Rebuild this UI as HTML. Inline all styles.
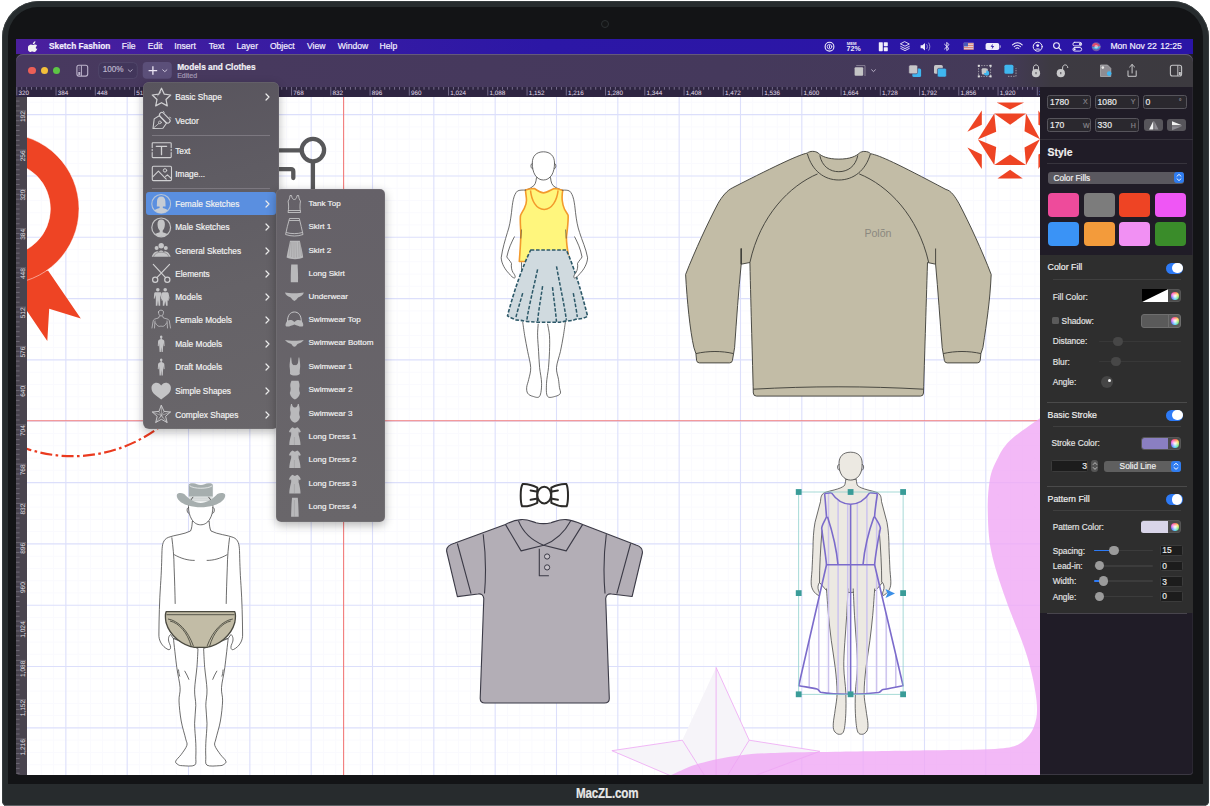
<!DOCTYPE html><html><head><meta charset="utf-8"><title>Sketch Fashion</title><style>
*{margin:0;padding:0;box-sizing:border-box}
html,body{width:1210px;height:806px;overflow:hidden;background:#fff;font-family:"Liberation Sans",sans-serif}
.a{position:absolute}
.t{position:absolute;white-space:nowrap;line-height:1;-webkit-text-stroke:0.18px currentColor}
.mb{color:#f4f0ff;font-size:8.6px;top:42.3px}
.mi{color:#eeeeee;font-size:8.4px}
.pl{color:#e4e4e4;font-size:8.2px}
</style></head><body>
<div class="a" style="left:2px;top:1px;width:1206.5px;height:805px;background:#272c2e;border-radius:37px 37px 5px 5px;box-shadow:inset 0 0 0 0.8px #3a3f41"></div>
<div class="a" style="left:8px;top:7px;width:1195px;height:777px;background:#131416;border-radius:30px 30px 0 0"></div>
<div class="a" style="left:8px;top:784px;width:1195px;height:21px;background:#272b2d"></div>
<div class="a" style="left:4px;top:805px;width:1202px;height:1px;background:#5d6264"></div>
<div class="a" style="left:601px;top:20px;width:8.4px;height:8.4px;border-radius:50%;border:1.6px solid #2c3032;background:#151617"></div>
<div class="t" style="left:575.6px;top:786.4px;font-size:14.5px;font-weight:bold;color:#e8e8e8;transform:scaleX(0.80);transform-origin:0 0;letter-spacing:-0.2px">MacZL.com</div>
<div class="a" style="left:16px;top:39px;width:1177px;height:736px;background:#1f1c25;border-radius:0 0 4px 4px;overflow:hidden"></div>
<div class="a" style="left:16px;top:39px;width:1177px;height:15px;background:linear-gradient(90deg,#4b1f9d 0%,#3a1ca2 20%,#2c17a6 45%,#2a14a6 100%)"></div>
<svg class="a" style="left:28px;top:40.5px" width="10" height="11" viewBox="0 0 10 11"><path fill="#f2f2f2" d="M6.6 0.3c0.1 0.8-0.3 1.6-0.8 2.1-0.5 0.5-1.2 0.8-1.8 0.8-0.1-0.8 0.3-1.5 0.8-2C5.2 0.7 6 0.3 6.6 0.3zM8.7 7.6c-0.3 0.7-0.5 1-0.9 1.6-0.6 0.8-1.3 1.7-2.2 1.7-0.8 0-1-0.5-2.1-0.5-1.1 0-1.3 0.5-2.1 0.5C0.5 10.9-0.2 10-0.8 9.2c0 0 0 0 0 0C-2.300 7 0.100 3.600 2.100 3.600c0.8 0 1.400 0.500 2 0.500 0.600 0 1.100-0.500 2.100-0.500 0.800 0 1.600 0.400 2.100 1.200-1.900 1-1.600 3.700 0.400 2.800z" transform="translate(0.8,0)"/></svg>
<div class="t mb" style="left:49px;font-weight:bold;font-size:8.3px">Sketch Fashion</div>
<div class="t mb" style="left:121.8px">File</div>
<div class="t mb" style="left:147.7px">Edit</div>
<div class="t mb" style="left:174.3px">Insert</div>
<div class="t mb" style="left:208.7px">Text</div>
<div class="t mb" style="left:236.5px">Layer</div>
<div class="t mb" style="left:269.9px">Object</div>
<div class="t mb" style="left:306.9px">View</div>
<div class="t mb" style="left:337.7px">Window</div>
<div class="t mb" style="left:379.6px">Help</div>
<div class="t mb" style="left:1110.4px">Mon Nov 22</div>
<div class="t mb" style="left:1160.3px">12:25</div>
<div class="a" style="left:16px;top:54px;width:1177px;height:33px;border-radius:7px 7px 0 0;background:linear-gradient(90deg,#48395f 0%,#45395c 60%,#443a58 84%,#3d3a42 88%,#3c3a3f 100%);box-shadow:inset 0 1px 0 #64597a"></div>
<div class="a" style="left:28.400000000000002px;top:66.89999999999999px;width:7.4px;height:7.4px;border-radius:50%;background:#ec5f57"></div>
<div class="a" style="left:40.8px;top:66.89999999999999px;width:7.4px;height:7.4px;border-radius:50%;background:#f4bf3a"></div>
<div class="a" style="left:53.0px;top:66.89999999999999px;width:7.4px;height:7.4px;border-radius:50%;background:#5dc545"></div>
<!-- left toolbar -->
<svg class="a" style="left:70px;top:58px" width="110" height="26" viewBox="70 58 110 26">
<rect x="76.9" y="65.3" width="10.8" height="10.8" rx="2" fill="none" stroke="#bdb4cc" stroke-width="1.1"/>
<path d="M81.4 65.5 V76" stroke="#bdb4cc" stroke-width="1"/>
<path d="M78.6 67.2 H79.8 M78.6 68.7 H79.8 M78.6 70.2 H79.8" stroke="#9d94ae" stroke-width="0.6"/>
<rect x="78.3" y="72" width="2" height="3" fill="#bdb4cc"/>
<rect x="98.7" y="62.6" width="38.6" height="15.9" rx="4" fill="#42365b" stroke="#51476b" stroke-width="0.9"/>
<path d="M128.2 69.8 L130.2 71.6 L132.2 69.8" fill="none" stroke="#bdb4cc" stroke-width="0.9" stroke-linecap="round" stroke-linejoin="round"/>
<rect x="142.7" y="62.1" width="29.1" height="16.6" rx="4" fill="#5b4f79"/>
<path d="M152.9 66.3 V74.8 M148.6 70.55 H157.2" stroke="#ece6f4" stroke-width="1.3"/>
<path d="M162.7 69.8 L164.8 71.7 L166.9 69.8" fill="none" stroke="#d6cfe2" stroke-width="0.9" stroke-linecap="round" stroke-linejoin="round"/>
</svg>
<div class="t" style="left:102.7px;top:66.3px;font-size:8.2px;color:#bdb5cc">100%</div>
<div class="t" style="left:177.2px;top:62.7px;font-size:8.3px;color:#f2f0f6;font-weight:bold">Models and Clothes</div>
<div class="t" style="left:177.2px;top:71.8px;font-size:7px;color:#a59cb6">Edited</div>
<!-- right toolbar -->
<svg class="a" style="left:840px;top:58px" width="350" height="26" viewBox="840 58 350 26">
<!-- align -->
<rect x="854.6" y="67.2" width="8.6" height="8.6" rx="1" fill="#c4c4c6"/>
<path d="M856.2 65.6 H865 V76" fill="none" stroke="#8c879a" stroke-width="0.9"/>
<path d="M871.6 69.8 L873.5 71.6 L875.4 69.8" fill="none" stroke="#c4bdd2" stroke-width="0.9" stroke-linecap="round" stroke-linejoin="round"/>
<!-- forward -->
<rect x="912.3" y="68.5" width="8.8" height="8.6" rx="1.5" fill="#3fb6f0"/>
<rect x="908.8" y="65" width="8.8" height="8.8" rx="1.5" fill="#c6c6c8" stroke="#46395d" stroke-width="0.6"/>
<!-- backward -->
<rect x="934" y="65" width="8.8" height="8.8" rx="1.5" fill="#c6c6c8"/>
<rect x="937.4" y="68.3" width="9" height="8.8" rx="1.5" fill="#3fb6f0" stroke="#46395d" stroke-width="0.6"/>
<!-- mask -->
<rect x="978.6" y="65.6" width="12" height="10.8" fill="none" stroke="#c6c6c8" stroke-width="0.7" stroke-dasharray="1.4 1.2"/>
<rect x="981.8" y="68.4" width="6" height="6" rx="1" fill="#c6c6c8"/>
<circle cx="986.6" cy="73" r="2.6" fill="#3fb6f0"/>
<rect x="981.8" y="68.4" width="4.5" height="4.5" rx="1" fill="#c6c6c8"/>
<rect x="977.8" y="64.8" width="2" height="2" fill="#e0e0e0"/><rect x="989.6" y="64.8" width="2" height="2" fill="#e0e0e0"/><rect x="977.8" y="75.4" width="2" height="2" fill="#e0e0e0"/><rect x="989.6" y="75.4" width="2" height="2" fill="#e0e0e0"/>
<!-- blue selected -->
<rect x="1004.4" y="64.8" width="9" height="9" rx="1.5" fill="#3fb6f0"/>
<path d="M1008 76.3 H1016 V68" fill="none" stroke="#c6c6c8" stroke-width="0.7" stroke-dasharray="1.4 1.2"/>
<!-- lock -->
<path d="M1033.4 70 V68 C1033.4 66 1034.6 64.9 1036 64.9 C1037.4 64.9 1038.6 66 1038.6 68 V70" fill="none" stroke="#c9c9cb" stroke-width="1"/>
<circle cx="1036" cy="73.2" r="4.1" fill="#c9c9cb"/>
<path d="M1036 72 V74.2" stroke="#3d3a44" stroke-width="0.9"/>
<!-- unlock -->
<path d="M1062.6 70 V68 C1062.6 66 1063.8 64.9 1065.2 64.9 C1066.6 64.9 1067.8 66 1067.8 68" fill="none" stroke="#c9c9cb" stroke-width="1"/>
<circle cx="1060.8" cy="73.2" r="4.1" fill="#c9c9cb"/>
<path d="M1060.8 72 V74.2" stroke="#3d3a44" stroke-width="0.9"/>
<!-- export doc -->
<path d="M1100.5 65 H1107.5 L1110.8 68.3 V76.5 H1100.5 Z" fill="#8e8c92" stroke="#b9b9bb" stroke-width="0.7"/>
<circle cx="1102.8" cy="67.6" r="1.3" fill="#e8e8e8"/>
<circle cx="1109.2" cy="73.6" r="2.3" fill="#3fb6f0"/>
<!-- share -->
<path d="M1128 70.5 V76.3 H1136.2 V70.5" fill="none" stroke="#cacacc" stroke-width="1"/>
<path d="M1132.1 73 V64.5 M1129.6 67 L1132.1 64.5 L1134.6 67" fill="none" stroke="#cacacc" stroke-width="1" stroke-linecap="round" stroke-linejoin="round"/>
<!-- sidebar right -->
<rect x="1170.4" y="65.2" width="11.2" height="10.8" rx="2" fill="none" stroke="#c4c4c6" stroke-width="1.1"/>
<path d="M1177.8 65.4 V76" stroke="#c4c4c6" stroke-width="1"/>
<path d="M1179.2 67.3 H1180.5 M1179.2 68.8 H1180.5 M1179.2 70.3 H1180.5" stroke="#9a9a9c" stroke-width="0.6"/>
<rect x="1178.8" y="72" width="2" height="3" fill="#c4c4c6"/>
</svg>
<!-- menubar right icons -->
<svg class="a" style="left:815px;top:39px" width="290" height="15" viewBox="815 39 290 15">
<g fill="none" stroke="#f0eefa" stroke-linecap="round" stroke-linejoin="round">
<circle cx="829.5" cy="46.7" r="4.4" stroke-width="1.1"/>
<circle cx="829.5" cy="46.7" r="2.3" stroke-width="0.8"/>
<path d="M829.5 45.6 V47.8" stroke-width="0.9"/>
<!-- layers -->
<path d="M905 41.8 L909.3 44 L905 46.2 L900.7 44 Z M900.7 46.4 L905 48.6 L909.3 46.4 M900.7 48.4 L905 50.6 L909.3 48.4" stroke-width="0.9"/>
<!-- volume waves -->
<path d="M926.8 44.5 C927.6 45.5 927.6 47.7 926.8 48.7 M928.8 43 C930.2 45 930.2 48.2 928.8 50.2" stroke-width="0.8" stroke="#b8b4d8"/>
<!-- bluetooth -->
<path d="M944.5 44.2 L949 48.6 L946.8 50.6 V42.4 L949 44.6 L944.5 49" stroke-width="0.9"/>
<!-- wifi -->
<path d="M1012.5 44.8 C1015.5 42 1019.5 42 1022.2 44.8 M1014.2 46.6 C1016 45 1018.6 45 1020.4 46.6 M1015.9 48.4 C1016.7 47.7 1018 47.7 1018.8 48.4" stroke-width="1.1"/>
<!-- user -->
<circle cx="1037.7" cy="46.7" r="4.5" stroke-width="1"/>
<!-- search -->
<circle cx="1056.5" cy="45.6" r="2.9" stroke-width="1.1"/>
<path d="M1058.6 47.7 L1061 50.1" stroke-width="1.2"/>
<!-- control center -->
<rect x="1072.9" y="42.3" width="8.8" height="3.6" rx="1.8" stroke-width="0.9"/>
<rect x="1072.9" y="47.5" width="8.8" height="3.6" rx="1.8" stroke-width="0.9"/>
</g>
<g fill="#f0eefa">
<text x="846.8" y="44.6" font-size="4.2" font-weight="bold" font-family="Liberation Sans">MEM</text>
<text x="846.6" y="51.3" font-size="7" font-weight="bold" font-family="Liberation Sans">72%</text>
<!-- magnet grid -->
<rect x="878.8" y="42.2" width="4" height="9" rx="0.6"/>
<rect x="883.8" y="42.2" width="4" height="4" rx="0.6"/>
<rect x="883.8" y="47.2" width="4" height="4" rx="0.6"/>
<!-- speaker -->
<path d="M920.6 45.2 H922.4 L925 43 V50.4 L922.4 48.2 H920.6 Z"/>
<!-- user head -->
<circle cx="1037.7" cy="45.6" r="1.4"/>
<path d="M1035 49.6 C1035.6 48.2 1039.8 48.2 1040.4 49.6 Z"/>
<!-- control dots -->
<circle cx="1080" cy="44.1" r="1.1"/><circle cx="1074.6" cy="49.3" r="1.1"/>
<!-- battery -->
<rect x="985.6" y="43" width="13.6" height="7" rx="1.8"/>
<rect x="999.6" y="45.3" width="1.2" height="2.4" rx="0.5" fill="#a9a3d8"/>
</g>
<path d="M992.8 43.8 L990.6 46.8 H992.4 L991.6 49.4 L994.2 46 H992.4 Z" fill="#2a14a6"/>
<!-- flag -->
<rect x="963.8" y="42.8" width="9.8" height="6.8" fill="#e8e8f0"/>
<path d="M963.8 43.8 H973.6 M963.8 45.6 H973.6 M963.8 47.4 H973.6 M963.8 49.2 H973.6" stroke="#d8604a" stroke-width="0.8"/>
<rect x="963.8" y="42.8" width="4.2" height="3.6" fill="#4a5ab8"/>
<!-- siri -->
<circle cx="1096.2" cy="46.7" r="4.5" fill="#6e5aa8"/>
<path d="M1092 46 C1093 43 1095 42.5 1097 43.5 C1099 44.5 1100 46 1100.6 47.5" fill="#e14b6e"/>
<path d="M1092 47.5 C1093.5 49 1096 50 1098 49 C1099.5 48 1100.4 47 1100.6 46" fill="#3fb8e8" opacity="0.9"/>
<circle cx="1096.2" cy="46.7" r="1.8" fill="#f0f0f0" opacity="0.6"/>
</svg>

<div class="a" style="left:16px;top:86.5px;width:1024px;height:10px;background:#2e2541"></div>
<div class="a" style="left:16px;top:96.5px;width:11px;height:678.5px;background:#48434e;border-radius:0 0 0 4px"></div>
<svg class="a" style="left:16px;top:86.5px" width="1024" height="10" viewBox="16 86.5 1024 10"><line x1="21.71" y1="86.5" x2="21.71" y2="89.2" stroke="#857c9c" stroke-width="0.8"/><line x1="26.61" y1="86.5" x2="26.61" y2="89.2" stroke="#857c9c" stroke-width="0.8"/><line x1="31.52" y1="86.5" x2="31.52" y2="89.2" stroke="#857c9c" stroke-width="0.8"/><line x1="36.42" y1="86.5" x2="36.42" y2="89.2" stroke="#857c9c" stroke-width="0.8"/><line x1="41.33" y1="86.5" x2="41.33" y2="89.2" stroke="#857c9c" stroke-width="0.8"/><line x1="46.24" y1="86.5" x2="46.24" y2="89.2" stroke="#857c9c" stroke-width="0.8"/><line x1="51.14" y1="86.5" x2="51.14" y2="89.2" stroke="#857c9c" stroke-width="0.8"/><line x1="16.8" y1="86.5" x2="16.8" y2="95" stroke="#857c9c" stroke-width="0.8"/><text x="18.4" y="94.6" font-size="6.3" fill="#e2dcec" font-family="Liberation Sans" text-rendering="geometricPrecision">320</text><line x1="60.96" y1="86.5" x2="60.96" y2="89.2" stroke="#857c9c" stroke-width="0.8"/><line x1="65.86" y1="86.5" x2="65.86" y2="89.2" stroke="#857c9c" stroke-width="0.8"/><line x1="70.77" y1="86.5" x2="70.77" y2="89.2" stroke="#857c9c" stroke-width="0.8"/><line x1="75.67" y1="86.5" x2="75.67" y2="89.2" stroke="#857c9c" stroke-width="0.8"/><line x1="80.58" y1="86.5" x2="80.58" y2="89.2" stroke="#857c9c" stroke-width="0.8"/><line x1="85.49" y1="86.5" x2="85.49" y2="89.2" stroke="#857c9c" stroke-width="0.8"/><line x1="90.39" y1="86.5" x2="90.39" y2="89.2" stroke="#857c9c" stroke-width="0.8"/><line x1="56.05" y1="86.5" x2="56.05" y2="95" stroke="#857c9c" stroke-width="0.8"/><text x="57.65" y="94.6" font-size="6.3" fill="#e2dcec" font-family="Liberation Sans" text-rendering="geometricPrecision">384</text><line x1="100.21" y1="86.5" x2="100.21" y2="89.2" stroke="#857c9c" stroke-width="0.8"/><line x1="105.11" y1="86.5" x2="105.11" y2="89.2" stroke="#857c9c" stroke-width="0.8"/><line x1="110.02" y1="86.5" x2="110.02" y2="89.2" stroke="#857c9c" stroke-width="0.8"/><line x1="114.92" y1="86.5" x2="114.92" y2="89.2" stroke="#857c9c" stroke-width="0.8"/><line x1="119.83" y1="86.5" x2="119.83" y2="89.2" stroke="#857c9c" stroke-width="0.8"/><line x1="124.74" y1="86.5" x2="124.74" y2="89.2" stroke="#857c9c" stroke-width="0.8"/><line x1="129.64" y1="86.5" x2="129.64" y2="89.2" stroke="#857c9c" stroke-width="0.8"/><line x1="95.3" y1="86.5" x2="95.3" y2="95" stroke="#857c9c" stroke-width="0.8"/><text x="96.9" y="94.6" font-size="6.3" fill="#e2dcec" font-family="Liberation Sans" text-rendering="geometricPrecision">448</text><line x1="139.46" y1="86.5" x2="139.46" y2="89.2" stroke="#857c9c" stroke-width="0.8"/><line x1="144.36" y1="86.5" x2="144.36" y2="89.2" stroke="#857c9c" stroke-width="0.8"/><line x1="149.27" y1="86.5" x2="149.27" y2="89.2" stroke="#857c9c" stroke-width="0.8"/><line x1="154.18" y1="86.5" x2="154.18" y2="89.2" stroke="#857c9c" stroke-width="0.8"/><line x1="159.08" y1="86.5" x2="159.08" y2="89.2" stroke="#857c9c" stroke-width="0.8"/><line x1="163.99" y1="86.5" x2="163.99" y2="89.2" stroke="#857c9c" stroke-width="0.8"/><line x1="168.89" y1="86.5" x2="168.89" y2="89.2" stroke="#857c9c" stroke-width="0.8"/><line x1="134.55" y1="86.5" x2="134.55" y2="95" stroke="#857c9c" stroke-width="0.8"/><text x="136.15" y="94.6" font-size="6.3" fill="#e2dcec" font-family="Liberation Sans" text-rendering="geometricPrecision">512</text><line x1="178.71" y1="86.5" x2="178.71" y2="89.2" stroke="#857c9c" stroke-width="0.8"/><line x1="183.61" y1="86.5" x2="183.61" y2="89.2" stroke="#857c9c" stroke-width="0.8"/><line x1="188.52" y1="86.5" x2="188.52" y2="89.2" stroke="#857c9c" stroke-width="0.8"/><line x1="193.43" y1="86.5" x2="193.43" y2="89.2" stroke="#857c9c" stroke-width="0.8"/><line x1="198.33" y1="86.5" x2="198.33" y2="89.2" stroke="#857c9c" stroke-width="0.8"/><line x1="203.24" y1="86.5" x2="203.24" y2="89.2" stroke="#857c9c" stroke-width="0.8"/><line x1="208.14" y1="86.5" x2="208.14" y2="89.2" stroke="#857c9c" stroke-width="0.8"/><line x1="173.8" y1="86.5" x2="173.8" y2="95" stroke="#857c9c" stroke-width="0.8"/><text x="175.4" y="94.6" font-size="6.3" fill="#e2dcec" font-family="Liberation Sans" text-rendering="geometricPrecision">576</text><line x1="217.96" y1="86.5" x2="217.96" y2="89.2" stroke="#857c9c" stroke-width="0.8"/><line x1="222.86" y1="86.5" x2="222.86" y2="89.2" stroke="#857c9c" stroke-width="0.8"/><line x1="227.77" y1="86.5" x2="227.77" y2="89.2" stroke="#857c9c" stroke-width="0.8"/><line x1="232.68" y1="86.5" x2="232.68" y2="89.2" stroke="#857c9c" stroke-width="0.8"/><line x1="237.58" y1="86.5" x2="237.58" y2="89.2" stroke="#857c9c" stroke-width="0.8"/><line x1="242.49" y1="86.5" x2="242.49" y2="89.2" stroke="#857c9c" stroke-width="0.8"/><line x1="247.39" y1="86.5" x2="247.39" y2="89.2" stroke="#857c9c" stroke-width="0.8"/><line x1="213.05" y1="86.5" x2="213.05" y2="95" stroke="#857c9c" stroke-width="0.8"/><text x="214.65" y="94.6" font-size="6.3" fill="#e2dcec" font-family="Liberation Sans" text-rendering="geometricPrecision">640</text><line x1="257.21" y1="86.5" x2="257.21" y2="89.2" stroke="#857c9c" stroke-width="0.8"/><line x1="262.11" y1="86.5" x2="262.11" y2="89.2" stroke="#857c9c" stroke-width="0.8"/><line x1="267.02" y1="86.5" x2="267.02" y2="89.2" stroke="#857c9c" stroke-width="0.8"/><line x1="271.93" y1="86.5" x2="271.93" y2="89.2" stroke="#857c9c" stroke-width="0.8"/><line x1="276.83" y1="86.5" x2="276.83" y2="89.2" stroke="#857c9c" stroke-width="0.8"/><line x1="281.74" y1="86.5" x2="281.74" y2="89.2" stroke="#857c9c" stroke-width="0.8"/><line x1="286.64" y1="86.5" x2="286.64" y2="89.2" stroke="#857c9c" stroke-width="0.8"/><line x1="252.3" y1="86.5" x2="252.3" y2="95" stroke="#857c9c" stroke-width="0.8"/><text x="253.9" y="94.6" font-size="6.3" fill="#e2dcec" font-family="Liberation Sans" text-rendering="geometricPrecision">704</text><line x1="296.46" y1="86.5" x2="296.46" y2="89.2" stroke="#857c9c" stroke-width="0.8"/><line x1="301.36" y1="86.5" x2="301.36" y2="89.2" stroke="#857c9c" stroke-width="0.8"/><line x1="306.27" y1="86.5" x2="306.27" y2="89.2" stroke="#857c9c" stroke-width="0.8"/><line x1="311.18" y1="86.5" x2="311.18" y2="89.2" stroke="#857c9c" stroke-width="0.8"/><line x1="316.08" y1="86.5" x2="316.08" y2="89.2" stroke="#857c9c" stroke-width="0.8"/><line x1="320.99" y1="86.5" x2="320.99" y2="89.2" stroke="#857c9c" stroke-width="0.8"/><line x1="325.89" y1="86.5" x2="325.89" y2="89.2" stroke="#857c9c" stroke-width="0.8"/><line x1="291.55" y1="86.5" x2="291.55" y2="95" stroke="#857c9c" stroke-width="0.8"/><text x="293.15" y="94.6" font-size="6.3" fill="#e2dcec" font-family="Liberation Sans" text-rendering="geometricPrecision">768</text><line x1="335.71" y1="86.5" x2="335.71" y2="89.2" stroke="#857c9c" stroke-width="0.8"/><line x1="340.61" y1="86.5" x2="340.61" y2="89.2" stroke="#857c9c" stroke-width="0.8"/><line x1="345.52" y1="86.5" x2="345.52" y2="89.2" stroke="#857c9c" stroke-width="0.8"/><line x1="350.43" y1="86.5" x2="350.43" y2="89.2" stroke="#857c9c" stroke-width="0.8"/><line x1="355.33" y1="86.5" x2="355.33" y2="89.2" stroke="#857c9c" stroke-width="0.8"/><line x1="360.24" y1="86.5" x2="360.24" y2="89.2" stroke="#857c9c" stroke-width="0.8"/><line x1="365.14" y1="86.5" x2="365.14" y2="89.2" stroke="#857c9c" stroke-width="0.8"/><line x1="330.8" y1="86.5" x2="330.8" y2="95" stroke="#857c9c" stroke-width="0.8"/><text x="332.4" y="94.6" font-size="6.3" fill="#e2dcec" font-family="Liberation Sans" text-rendering="geometricPrecision">832</text><line x1="374.96" y1="86.5" x2="374.96" y2="89.2" stroke="#857c9c" stroke-width="0.8"/><line x1="379.86" y1="86.5" x2="379.86" y2="89.2" stroke="#857c9c" stroke-width="0.8"/><line x1="384.77" y1="86.5" x2="384.77" y2="89.2" stroke="#857c9c" stroke-width="0.8"/><line x1="389.68" y1="86.5" x2="389.68" y2="89.2" stroke="#857c9c" stroke-width="0.8"/><line x1="394.58" y1="86.5" x2="394.58" y2="89.2" stroke="#857c9c" stroke-width="0.8"/><line x1="399.49" y1="86.5" x2="399.49" y2="89.2" stroke="#857c9c" stroke-width="0.8"/><line x1="404.39" y1="86.5" x2="404.39" y2="89.2" stroke="#857c9c" stroke-width="0.8"/><line x1="370.05" y1="86.5" x2="370.05" y2="95" stroke="#857c9c" stroke-width="0.8"/><text x="371.65" y="94.6" font-size="6.3" fill="#e2dcec" font-family="Liberation Sans" text-rendering="geometricPrecision">896</text><line x1="414.21" y1="86.5" x2="414.21" y2="89.2" stroke="#857c9c" stroke-width="0.8"/><line x1="419.11" y1="86.5" x2="419.11" y2="89.2" stroke="#857c9c" stroke-width="0.8"/><line x1="424.02" y1="86.5" x2="424.02" y2="89.2" stroke="#857c9c" stroke-width="0.8"/><line x1="428.93" y1="86.5" x2="428.93" y2="89.2" stroke="#857c9c" stroke-width="0.8"/><line x1="433.83" y1="86.5" x2="433.83" y2="89.2" stroke="#857c9c" stroke-width="0.8"/><line x1="438.74" y1="86.5" x2="438.74" y2="89.2" stroke="#857c9c" stroke-width="0.8"/><line x1="443.64" y1="86.5" x2="443.64" y2="89.2" stroke="#857c9c" stroke-width="0.8"/><line x1="409.3" y1="86.5" x2="409.3" y2="95" stroke="#857c9c" stroke-width="0.8"/><text x="410.9" y="94.6" font-size="6.3" fill="#e2dcec" font-family="Liberation Sans" text-rendering="geometricPrecision">960</text><line x1="453.46" y1="86.5" x2="453.46" y2="89.2" stroke="#857c9c" stroke-width="0.8"/><line x1="458.36" y1="86.5" x2="458.36" y2="89.2" stroke="#857c9c" stroke-width="0.8"/><line x1="463.27" y1="86.5" x2="463.27" y2="89.2" stroke="#857c9c" stroke-width="0.8"/><line x1="468.18" y1="86.5" x2="468.18" y2="89.2" stroke="#857c9c" stroke-width="0.8"/><line x1="473.08" y1="86.5" x2="473.08" y2="89.2" stroke="#857c9c" stroke-width="0.8"/><line x1="477.99" y1="86.5" x2="477.99" y2="89.2" stroke="#857c9c" stroke-width="0.8"/><line x1="482.89" y1="86.5" x2="482.89" y2="89.2" stroke="#857c9c" stroke-width="0.8"/><line x1="448.55" y1="86.5" x2="448.55" y2="95" stroke="#857c9c" stroke-width="0.8"/><text x="450.15" y="94.6" font-size="6.3" fill="#e2dcec" font-family="Liberation Sans" text-rendering="geometricPrecision">1,024</text><line x1="492.71" y1="86.5" x2="492.71" y2="89.2" stroke="#857c9c" stroke-width="0.8"/><line x1="497.61" y1="86.5" x2="497.61" y2="89.2" stroke="#857c9c" stroke-width="0.8"/><line x1="502.52" y1="86.5" x2="502.52" y2="89.2" stroke="#857c9c" stroke-width="0.8"/><line x1="507.43" y1="86.5" x2="507.43" y2="89.2" stroke="#857c9c" stroke-width="0.8"/><line x1="512.33" y1="86.5" x2="512.33" y2="89.2" stroke="#857c9c" stroke-width="0.8"/><line x1="517.24" y1="86.5" x2="517.24" y2="89.2" stroke="#857c9c" stroke-width="0.8"/><line x1="522.14" y1="86.5" x2="522.14" y2="89.2" stroke="#857c9c" stroke-width="0.8"/><line x1="487.8" y1="86.5" x2="487.8" y2="95" stroke="#857c9c" stroke-width="0.8"/><text x="489.4" y="94.6" font-size="6.3" fill="#e2dcec" font-family="Liberation Sans" text-rendering="geometricPrecision">1,088</text><line x1="531.96" y1="86.5" x2="531.96" y2="89.2" stroke="#857c9c" stroke-width="0.8"/><line x1="536.86" y1="86.5" x2="536.86" y2="89.2" stroke="#857c9c" stroke-width="0.8"/><line x1="541.77" y1="86.5" x2="541.77" y2="89.2" stroke="#857c9c" stroke-width="0.8"/><line x1="546.67" y1="86.5" x2="546.67" y2="89.2" stroke="#857c9c" stroke-width="0.8"/><line x1="551.58" y1="86.5" x2="551.58" y2="89.2" stroke="#857c9c" stroke-width="0.8"/><line x1="556.49" y1="86.5" x2="556.49" y2="89.2" stroke="#857c9c" stroke-width="0.8"/><line x1="561.39" y1="86.5" x2="561.39" y2="89.2" stroke="#857c9c" stroke-width="0.8"/><line x1="527.05" y1="86.5" x2="527.05" y2="95" stroke="#857c9c" stroke-width="0.8"/><text x="528.65" y="94.6" font-size="6.3" fill="#e2dcec" font-family="Liberation Sans" text-rendering="geometricPrecision">1,152</text><line x1="571.21" y1="86.5" x2="571.21" y2="89.2" stroke="#857c9c" stroke-width="0.8"/><line x1="576.11" y1="86.5" x2="576.11" y2="89.2" stroke="#857c9c" stroke-width="0.8"/><line x1="581.02" y1="86.5" x2="581.02" y2="89.2" stroke="#857c9c" stroke-width="0.8"/><line x1="585.92" y1="86.5" x2="585.92" y2="89.2" stroke="#857c9c" stroke-width="0.8"/><line x1="590.83" y1="86.5" x2="590.83" y2="89.2" stroke="#857c9c" stroke-width="0.8"/><line x1="595.74" y1="86.5" x2="595.74" y2="89.2" stroke="#857c9c" stroke-width="0.8"/><line x1="600.64" y1="86.5" x2="600.64" y2="89.2" stroke="#857c9c" stroke-width="0.8"/><line x1="566.3" y1="86.5" x2="566.3" y2="95" stroke="#857c9c" stroke-width="0.8"/><text x="567.9" y="94.6" font-size="6.3" fill="#e2dcec" font-family="Liberation Sans" text-rendering="geometricPrecision">1,216</text><line x1="610.46" y1="86.5" x2="610.46" y2="89.2" stroke="#857c9c" stroke-width="0.8"/><line x1="615.36" y1="86.5" x2="615.36" y2="89.2" stroke="#857c9c" stroke-width="0.8"/><line x1="620.27" y1="86.5" x2="620.27" y2="89.2" stroke="#857c9c" stroke-width="0.8"/><line x1="625.17" y1="86.5" x2="625.17" y2="89.2" stroke="#857c9c" stroke-width="0.8"/><line x1="630.08" y1="86.5" x2="630.08" y2="89.2" stroke="#857c9c" stroke-width="0.8"/><line x1="634.99" y1="86.5" x2="634.99" y2="89.2" stroke="#857c9c" stroke-width="0.8"/><line x1="639.89" y1="86.5" x2="639.89" y2="89.2" stroke="#857c9c" stroke-width="0.8"/><line x1="605.55" y1="86.5" x2="605.55" y2="95" stroke="#857c9c" stroke-width="0.8"/><text x="607.15" y="94.6" font-size="6.3" fill="#e2dcec" font-family="Liberation Sans" text-rendering="geometricPrecision">1,280</text><line x1="649.71" y1="86.5" x2="649.71" y2="89.2" stroke="#857c9c" stroke-width="0.8"/><line x1="654.61" y1="86.5" x2="654.61" y2="89.2" stroke="#857c9c" stroke-width="0.8"/><line x1="659.52" y1="86.5" x2="659.52" y2="89.2" stroke="#857c9c" stroke-width="0.8"/><line x1="664.42" y1="86.5" x2="664.42" y2="89.2" stroke="#857c9c" stroke-width="0.8"/><line x1="669.33" y1="86.5" x2="669.33" y2="89.2" stroke="#857c9c" stroke-width="0.8"/><line x1="674.24" y1="86.5" x2="674.24" y2="89.2" stroke="#857c9c" stroke-width="0.8"/><line x1="679.14" y1="86.5" x2="679.14" y2="89.2" stroke="#857c9c" stroke-width="0.8"/><line x1="644.8" y1="86.5" x2="644.8" y2="95" stroke="#857c9c" stroke-width="0.8"/><text x="646.4" y="94.6" font-size="6.3" fill="#e2dcec" font-family="Liberation Sans" text-rendering="geometricPrecision">1,344</text><line x1="688.96" y1="86.5" x2="688.96" y2="89.2" stroke="#857c9c" stroke-width="0.8"/><line x1="693.86" y1="86.5" x2="693.86" y2="89.2" stroke="#857c9c" stroke-width="0.8"/><line x1="698.77" y1="86.5" x2="698.77" y2="89.2" stroke="#857c9c" stroke-width="0.8"/><line x1="703.67" y1="86.5" x2="703.67" y2="89.2" stroke="#857c9c" stroke-width="0.8"/><line x1="708.58" y1="86.5" x2="708.58" y2="89.2" stroke="#857c9c" stroke-width="0.8"/><line x1="713.49" y1="86.5" x2="713.49" y2="89.2" stroke="#857c9c" stroke-width="0.8"/><line x1="718.39" y1="86.5" x2="718.39" y2="89.2" stroke="#857c9c" stroke-width="0.8"/><line x1="684.05" y1="86.5" x2="684.05" y2="95" stroke="#857c9c" stroke-width="0.8"/><text x="685.65" y="94.6" font-size="6.3" fill="#e2dcec" font-family="Liberation Sans" text-rendering="geometricPrecision">1,408</text><line x1="728.21" y1="86.5" x2="728.21" y2="89.2" stroke="#857c9c" stroke-width="0.8"/><line x1="733.11" y1="86.5" x2="733.11" y2="89.2" stroke="#857c9c" stroke-width="0.8"/><line x1="738.02" y1="86.5" x2="738.02" y2="89.2" stroke="#857c9c" stroke-width="0.8"/><line x1="742.92" y1="86.5" x2="742.92" y2="89.2" stroke="#857c9c" stroke-width="0.8"/><line x1="747.83" y1="86.5" x2="747.83" y2="89.2" stroke="#857c9c" stroke-width="0.8"/><line x1="752.74" y1="86.5" x2="752.74" y2="89.2" stroke="#857c9c" stroke-width="0.8"/><line x1="757.64" y1="86.5" x2="757.64" y2="89.2" stroke="#857c9c" stroke-width="0.8"/><line x1="723.3" y1="86.5" x2="723.3" y2="95" stroke="#857c9c" stroke-width="0.8"/><text x="724.9" y="94.6" font-size="6.3" fill="#e2dcec" font-family="Liberation Sans" text-rendering="geometricPrecision">1,472</text><line x1="767.46" y1="86.5" x2="767.46" y2="89.2" stroke="#857c9c" stroke-width="0.8"/><line x1="772.36" y1="86.5" x2="772.36" y2="89.2" stroke="#857c9c" stroke-width="0.8"/><line x1="777.27" y1="86.5" x2="777.27" y2="89.2" stroke="#857c9c" stroke-width="0.8"/><line x1="782.17" y1="86.5" x2="782.17" y2="89.2" stroke="#857c9c" stroke-width="0.8"/><line x1="787.08" y1="86.5" x2="787.08" y2="89.2" stroke="#857c9c" stroke-width="0.8"/><line x1="791.99" y1="86.5" x2="791.99" y2="89.2" stroke="#857c9c" stroke-width="0.8"/><line x1="796.89" y1="86.5" x2="796.89" y2="89.2" stroke="#857c9c" stroke-width="0.8"/><line x1="762.55" y1="86.5" x2="762.55" y2="95" stroke="#857c9c" stroke-width="0.8"/><text x="764.15" y="94.6" font-size="6.3" fill="#e2dcec" font-family="Liberation Sans" text-rendering="geometricPrecision">1,536</text><line x1="806.71" y1="86.5" x2="806.71" y2="89.2" stroke="#857c9c" stroke-width="0.8"/><line x1="811.61" y1="86.5" x2="811.61" y2="89.2" stroke="#857c9c" stroke-width="0.8"/><line x1="816.52" y1="86.5" x2="816.52" y2="89.2" stroke="#857c9c" stroke-width="0.8"/><line x1="821.42" y1="86.5" x2="821.42" y2="89.2" stroke="#857c9c" stroke-width="0.8"/><line x1="826.33" y1="86.5" x2="826.33" y2="89.2" stroke="#857c9c" stroke-width="0.8"/><line x1="831.24" y1="86.5" x2="831.24" y2="89.2" stroke="#857c9c" stroke-width="0.8"/><line x1="836.14" y1="86.5" x2="836.14" y2="89.2" stroke="#857c9c" stroke-width="0.8"/><line x1="801.8" y1="86.5" x2="801.8" y2="95" stroke="#857c9c" stroke-width="0.8"/><text x="803.4" y="94.6" font-size="6.3" fill="#e2dcec" font-family="Liberation Sans" text-rendering="geometricPrecision">1,600</text><line x1="845.96" y1="86.5" x2="845.96" y2="89.2" stroke="#857c9c" stroke-width="0.8"/><line x1="850.86" y1="86.5" x2="850.86" y2="89.2" stroke="#857c9c" stroke-width="0.8"/><line x1="855.77" y1="86.5" x2="855.77" y2="89.2" stroke="#857c9c" stroke-width="0.8"/><line x1="860.67" y1="86.5" x2="860.67" y2="89.2" stroke="#857c9c" stroke-width="0.8"/><line x1="865.58" y1="86.5" x2="865.58" y2="89.2" stroke="#857c9c" stroke-width="0.8"/><line x1="870.49" y1="86.5" x2="870.49" y2="89.2" stroke="#857c9c" stroke-width="0.8"/><line x1="875.39" y1="86.5" x2="875.39" y2="89.2" stroke="#857c9c" stroke-width="0.8"/><line x1="841.05" y1="86.5" x2="841.05" y2="95" stroke="#857c9c" stroke-width="0.8"/><text x="842.65" y="94.6" font-size="6.3" fill="#e2dcec" font-family="Liberation Sans" text-rendering="geometricPrecision">1,664</text><line x1="885.21" y1="86.5" x2="885.21" y2="89.2" stroke="#857c9c" stroke-width="0.8"/><line x1="890.11" y1="86.5" x2="890.11" y2="89.2" stroke="#857c9c" stroke-width="0.8"/><line x1="895.02" y1="86.5" x2="895.02" y2="89.2" stroke="#857c9c" stroke-width="0.8"/><line x1="899.92" y1="86.5" x2="899.92" y2="89.2" stroke="#857c9c" stroke-width="0.8"/><line x1="904.83" y1="86.5" x2="904.83" y2="89.2" stroke="#857c9c" stroke-width="0.8"/><line x1="909.74" y1="86.5" x2="909.74" y2="89.2" stroke="#857c9c" stroke-width="0.8"/><line x1="914.64" y1="86.5" x2="914.64" y2="89.2" stroke="#857c9c" stroke-width="0.8"/><line x1="880.3" y1="86.5" x2="880.3" y2="95" stroke="#857c9c" stroke-width="0.8"/><text x="881.9" y="94.6" font-size="6.3" fill="#e2dcec" font-family="Liberation Sans" text-rendering="geometricPrecision">1,728</text><line x1="924.46" y1="86.5" x2="924.46" y2="89.2" stroke="#857c9c" stroke-width="0.8"/><line x1="929.36" y1="86.5" x2="929.36" y2="89.2" stroke="#857c9c" stroke-width="0.8"/><line x1="934.27" y1="86.5" x2="934.27" y2="89.2" stroke="#857c9c" stroke-width="0.8"/><line x1="939.17" y1="86.5" x2="939.17" y2="89.2" stroke="#857c9c" stroke-width="0.8"/><line x1="944.08" y1="86.5" x2="944.08" y2="89.2" stroke="#857c9c" stroke-width="0.8"/><line x1="948.99" y1="86.5" x2="948.99" y2="89.2" stroke="#857c9c" stroke-width="0.8"/><line x1="953.89" y1="86.5" x2="953.89" y2="89.2" stroke="#857c9c" stroke-width="0.8"/><line x1="919.55" y1="86.5" x2="919.55" y2="95" stroke="#857c9c" stroke-width="0.8"/><text x="921.15" y="94.6" font-size="6.3" fill="#e2dcec" font-family="Liberation Sans" text-rendering="geometricPrecision">1,792</text><line x1="963.71" y1="86.5" x2="963.71" y2="89.2" stroke="#857c9c" stroke-width="0.8"/><line x1="968.61" y1="86.5" x2="968.61" y2="89.2" stroke="#857c9c" stroke-width="0.8"/><line x1="973.52" y1="86.5" x2="973.52" y2="89.2" stroke="#857c9c" stroke-width="0.8"/><line x1="978.42" y1="86.5" x2="978.42" y2="89.2" stroke="#857c9c" stroke-width="0.8"/><line x1="983.33" y1="86.5" x2="983.33" y2="89.2" stroke="#857c9c" stroke-width="0.8"/><line x1="988.24" y1="86.5" x2="988.24" y2="89.2" stroke="#857c9c" stroke-width="0.8"/><line x1="993.14" y1="86.5" x2="993.14" y2="89.2" stroke="#857c9c" stroke-width="0.8"/><line x1="958.8" y1="86.5" x2="958.8" y2="95" stroke="#857c9c" stroke-width="0.8"/><text x="960.4" y="94.6" font-size="6.3" fill="#e2dcec" font-family="Liberation Sans" text-rendering="geometricPrecision">1,856</text><line x1="1002.96" y1="86.5" x2="1002.96" y2="89.2" stroke="#857c9c" stroke-width="0.8"/><line x1="1007.86" y1="86.5" x2="1007.86" y2="89.2" stroke="#857c9c" stroke-width="0.8"/><line x1="1012.77" y1="86.5" x2="1012.77" y2="89.2" stroke="#857c9c" stroke-width="0.8"/><line x1="1017.67" y1="86.5" x2="1017.67" y2="89.2" stroke="#857c9c" stroke-width="0.8"/><line x1="1022.58" y1="86.5" x2="1022.58" y2="89.2" stroke="#857c9c" stroke-width="0.8"/><line x1="1027.49" y1="86.5" x2="1027.49" y2="89.2" stroke="#857c9c" stroke-width="0.8"/><line x1="1032.39" y1="86.5" x2="1032.39" y2="89.2" stroke="#857c9c" stroke-width="0.8"/><line x1="998.05" y1="86.5" x2="998.05" y2="95" stroke="#857c9c" stroke-width="0.8"/><text x="999.65" y="94.6" font-size="6.3" fill="#e2dcec" font-family="Liberation Sans" text-rendering="geometricPrecision">1,920</text><line x1="1037.3" y1="86.5" x2="1037.3" y2="95" stroke="#857c9c" stroke-width="0.8"/><text x="1038.9" y="94.6" font-size="6.3" fill="#e2dcec" font-family="Liberation Sans" text-rendering="geometricPrecision">1,984</text></svg>
<svg class="a" style="left:16px;top:96.5px" width="11" height="678.5" viewBox="16 96.5 11 678.5"><line x1="16" y1="100.59" x2="19.6" y2="100.59" stroke="#77727d" stroke-width="0.8"/><line x1="16" y1="105.49" x2="19.6" y2="105.49" stroke="#77727d" stroke-width="0.8"/><text transform="translate(25.1,71.35) rotate(-90)" text-anchor="end" font-size="6.6" fill="#e4e1e8" font-family="Liberation Sans" text-rendering="geometricPrecision">128</text><line x1="16" y1="115.31" x2="19.6" y2="115.31" stroke="#77727d" stroke-width="0.8"/><line x1="16" y1="120.21" x2="19.6" y2="120.21" stroke="#77727d" stroke-width="0.8"/><line x1="16" y1="125.12" x2="19.6" y2="125.12" stroke="#77727d" stroke-width="0.8"/><line x1="16" y1="130.03" x2="19.6" y2="130.03" stroke="#77727d" stroke-width="0.8"/><line x1="16" y1="134.93" x2="19.6" y2="134.93" stroke="#77727d" stroke-width="0.8"/><line x1="16" y1="139.84" x2="19.6" y2="139.84" stroke="#77727d" stroke-width="0.8"/><line x1="16" y1="144.74" x2="19.6" y2="144.74" stroke="#77727d" stroke-width="0.8"/><line x1="16" y1="110.4" x2="26" y2="110.4" stroke="#77727d" stroke-width="0.8"/><text transform="translate(25.1,110.6) rotate(-90)" text-anchor="end" font-size="6.6" fill="#e4e1e8" font-family="Liberation Sans" text-rendering="geometricPrecision">192</text><line x1="16" y1="154.56" x2="19.6" y2="154.56" stroke="#77727d" stroke-width="0.8"/><line x1="16" y1="159.46" x2="19.6" y2="159.46" stroke="#77727d" stroke-width="0.8"/><line x1="16" y1="164.37" x2="19.6" y2="164.37" stroke="#77727d" stroke-width="0.8"/><line x1="16" y1="169.28" x2="19.6" y2="169.28" stroke="#77727d" stroke-width="0.8"/><line x1="16" y1="174.18" x2="19.6" y2="174.18" stroke="#77727d" stroke-width="0.8"/><line x1="16" y1="179.09" x2="19.6" y2="179.09" stroke="#77727d" stroke-width="0.8"/><line x1="16" y1="183.99" x2="19.6" y2="183.99" stroke="#77727d" stroke-width="0.8"/><line x1="16" y1="149.65" x2="26" y2="149.65" stroke="#77727d" stroke-width="0.8"/><text transform="translate(25.1,149.85) rotate(-90)" text-anchor="end" font-size="6.6" fill="#e4e1e8" font-family="Liberation Sans" text-rendering="geometricPrecision">256</text><line x1="16" y1="193.81" x2="19.6" y2="193.81" stroke="#77727d" stroke-width="0.8"/><line x1="16" y1="198.71" x2="19.6" y2="198.71" stroke="#77727d" stroke-width="0.8"/><line x1="16" y1="203.62" x2="19.6" y2="203.62" stroke="#77727d" stroke-width="0.8"/><line x1="16" y1="208.53" x2="19.6" y2="208.53" stroke="#77727d" stroke-width="0.8"/><line x1="16" y1="213.43" x2="19.6" y2="213.43" stroke="#77727d" stroke-width="0.8"/><line x1="16" y1="218.34" x2="19.6" y2="218.34" stroke="#77727d" stroke-width="0.8"/><line x1="16" y1="223.24" x2="19.6" y2="223.24" stroke="#77727d" stroke-width="0.8"/><line x1="16" y1="188.9" x2="26" y2="188.9" stroke="#77727d" stroke-width="0.8"/><text transform="translate(25.1,189.1) rotate(-90)" text-anchor="end" font-size="6.6" fill="#e4e1e8" font-family="Liberation Sans" text-rendering="geometricPrecision">320</text><line x1="16" y1="233.06" x2="19.6" y2="233.06" stroke="#77727d" stroke-width="0.8"/><line x1="16" y1="237.96" x2="19.6" y2="237.96" stroke="#77727d" stroke-width="0.8"/><line x1="16" y1="242.87" x2="19.6" y2="242.87" stroke="#77727d" stroke-width="0.8"/><line x1="16" y1="247.78" x2="19.6" y2="247.78" stroke="#77727d" stroke-width="0.8"/><line x1="16" y1="252.68" x2="19.6" y2="252.68" stroke="#77727d" stroke-width="0.8"/><line x1="16" y1="257.59" x2="19.6" y2="257.59" stroke="#77727d" stroke-width="0.8"/><line x1="16" y1="262.49" x2="19.6" y2="262.49" stroke="#77727d" stroke-width="0.8"/><line x1="16" y1="228.15" x2="26" y2="228.15" stroke="#77727d" stroke-width="0.8"/><text transform="translate(25.1,228.35) rotate(-90)" text-anchor="end" font-size="6.6" fill="#e4e1e8" font-family="Liberation Sans" text-rendering="geometricPrecision">384</text><line x1="16" y1="272.31" x2="19.6" y2="272.31" stroke="#77727d" stroke-width="0.8"/><line x1="16" y1="277.21" x2="19.6" y2="277.21" stroke="#77727d" stroke-width="0.8"/><line x1="16" y1="282.12" x2="19.6" y2="282.12" stroke="#77727d" stroke-width="0.8"/><line x1="16" y1="287.02" x2="19.6" y2="287.02" stroke="#77727d" stroke-width="0.8"/><line x1="16" y1="291.93" x2="19.6" y2="291.93" stroke="#77727d" stroke-width="0.8"/><line x1="16" y1="296.84" x2="19.6" y2="296.84" stroke="#77727d" stroke-width="0.8"/><line x1="16" y1="301.74" x2="19.6" y2="301.74" stroke="#77727d" stroke-width="0.8"/><line x1="16" y1="267.4" x2="26" y2="267.4" stroke="#77727d" stroke-width="0.8"/><text transform="translate(25.1,267.6) rotate(-90)" text-anchor="end" font-size="6.6" fill="#e4e1e8" font-family="Liberation Sans" text-rendering="geometricPrecision">448</text><line x1="16" y1="311.56" x2="19.6" y2="311.56" stroke="#77727d" stroke-width="0.8"/><line x1="16" y1="316.46" x2="19.6" y2="316.46" stroke="#77727d" stroke-width="0.8"/><line x1="16" y1="321.37" x2="19.6" y2="321.37" stroke="#77727d" stroke-width="0.8"/><line x1="16" y1="326.27" x2="19.6" y2="326.27" stroke="#77727d" stroke-width="0.8"/><line x1="16" y1="331.18" x2="19.6" y2="331.18" stroke="#77727d" stroke-width="0.8"/><line x1="16" y1="336.09" x2="19.6" y2="336.09" stroke="#77727d" stroke-width="0.8"/><line x1="16" y1="340.99" x2="19.6" y2="340.99" stroke="#77727d" stroke-width="0.8"/><line x1="16" y1="306.65" x2="26" y2="306.65" stroke="#77727d" stroke-width="0.8"/><text transform="translate(25.1,306.85) rotate(-90)" text-anchor="end" font-size="6.6" fill="#e4e1e8" font-family="Liberation Sans" text-rendering="geometricPrecision">512</text><line x1="16" y1="350.81" x2="19.6" y2="350.81" stroke="#77727d" stroke-width="0.8"/><line x1="16" y1="355.71" x2="19.6" y2="355.71" stroke="#77727d" stroke-width="0.8"/><line x1="16" y1="360.62" x2="19.6" y2="360.62" stroke="#77727d" stroke-width="0.8"/><line x1="16" y1="365.52" x2="19.6" y2="365.52" stroke="#77727d" stroke-width="0.8"/><line x1="16" y1="370.43" x2="19.6" y2="370.43" stroke="#77727d" stroke-width="0.8"/><line x1="16" y1="375.34" x2="19.6" y2="375.34" stroke="#77727d" stroke-width="0.8"/><line x1="16" y1="380.24" x2="19.6" y2="380.24" stroke="#77727d" stroke-width="0.8"/><line x1="16" y1="345.9" x2="26" y2="345.9" stroke="#77727d" stroke-width="0.8"/><text transform="translate(25.1,346.1) rotate(-90)" text-anchor="end" font-size="6.6" fill="#e4e1e8" font-family="Liberation Sans" text-rendering="geometricPrecision">576</text><line x1="16" y1="390.06" x2="19.6" y2="390.06" stroke="#77727d" stroke-width="0.8"/><line x1="16" y1="394.96" x2="19.6" y2="394.96" stroke="#77727d" stroke-width="0.8"/><line x1="16" y1="399.87" x2="19.6" y2="399.87" stroke="#77727d" stroke-width="0.8"/><line x1="16" y1="404.77" x2="19.6" y2="404.77" stroke="#77727d" stroke-width="0.8"/><line x1="16" y1="409.68" x2="19.6" y2="409.68" stroke="#77727d" stroke-width="0.8"/><line x1="16" y1="414.59" x2="19.6" y2="414.59" stroke="#77727d" stroke-width="0.8"/><line x1="16" y1="419.49" x2="19.6" y2="419.49" stroke="#77727d" stroke-width="0.8"/><line x1="16" y1="385.15" x2="26" y2="385.15" stroke="#77727d" stroke-width="0.8"/><text transform="translate(25.1,385.35) rotate(-90)" text-anchor="end" font-size="6.6" fill="#e4e1e8" font-family="Liberation Sans" text-rendering="geometricPrecision">640</text><line x1="16" y1="429.31" x2="19.6" y2="429.31" stroke="#77727d" stroke-width="0.8"/><line x1="16" y1="434.21" x2="19.6" y2="434.21" stroke="#77727d" stroke-width="0.8"/><line x1="16" y1="439.12" x2="19.6" y2="439.12" stroke="#77727d" stroke-width="0.8"/><line x1="16" y1="444.02" x2="19.6" y2="444.02" stroke="#77727d" stroke-width="0.8"/><line x1="16" y1="448.93" x2="19.6" y2="448.93" stroke="#77727d" stroke-width="0.8"/><line x1="16" y1="453.84" x2="19.6" y2="453.84" stroke="#77727d" stroke-width="0.8"/><line x1="16" y1="458.74" x2="19.6" y2="458.74" stroke="#77727d" stroke-width="0.8"/><line x1="16" y1="424.4" x2="26" y2="424.4" stroke="#77727d" stroke-width="0.8"/><text transform="translate(25.1,424.6) rotate(-90)" text-anchor="end" font-size="6.6" fill="#e4e1e8" font-family="Liberation Sans" text-rendering="geometricPrecision">704</text><line x1="16" y1="468.56" x2="19.6" y2="468.56" stroke="#77727d" stroke-width="0.8"/><line x1="16" y1="473.46" x2="19.6" y2="473.46" stroke="#77727d" stroke-width="0.8"/><line x1="16" y1="478.37" x2="19.6" y2="478.37" stroke="#77727d" stroke-width="0.8"/><line x1="16" y1="483.27" x2="19.6" y2="483.27" stroke="#77727d" stroke-width="0.8"/><line x1="16" y1="488.18" x2="19.6" y2="488.18" stroke="#77727d" stroke-width="0.8"/><line x1="16" y1="493.09" x2="19.6" y2="493.09" stroke="#77727d" stroke-width="0.8"/><line x1="16" y1="497.99" x2="19.6" y2="497.99" stroke="#77727d" stroke-width="0.8"/><line x1="16" y1="463.65" x2="26" y2="463.65" stroke="#77727d" stroke-width="0.8"/><text transform="translate(25.1,463.85) rotate(-90)" text-anchor="end" font-size="6.6" fill="#e4e1e8" font-family="Liberation Sans" text-rendering="geometricPrecision">768</text><line x1="16" y1="507.81" x2="19.6" y2="507.81" stroke="#77727d" stroke-width="0.8"/><line x1="16" y1="512.71" x2="19.6" y2="512.71" stroke="#77727d" stroke-width="0.8"/><line x1="16" y1="517.62" x2="19.6" y2="517.62" stroke="#77727d" stroke-width="0.8"/><line x1="16" y1="522.52" x2="19.6" y2="522.52" stroke="#77727d" stroke-width="0.8"/><line x1="16" y1="527.43" x2="19.6" y2="527.43" stroke="#77727d" stroke-width="0.8"/><line x1="16" y1="532.34" x2="19.6" y2="532.34" stroke="#77727d" stroke-width="0.8"/><line x1="16" y1="537.24" x2="19.6" y2="537.24" stroke="#77727d" stroke-width="0.8"/><line x1="16" y1="502.9" x2="26" y2="502.9" stroke="#77727d" stroke-width="0.8"/><text transform="translate(25.1,503.1) rotate(-90)" text-anchor="end" font-size="6.6" fill="#e4e1e8" font-family="Liberation Sans" text-rendering="geometricPrecision">832</text><line x1="16" y1="547.06" x2="19.6" y2="547.06" stroke="#77727d" stroke-width="0.8"/><line x1="16" y1="551.96" x2="19.6" y2="551.96" stroke="#77727d" stroke-width="0.8"/><line x1="16" y1="556.87" x2="19.6" y2="556.87" stroke="#77727d" stroke-width="0.8"/><line x1="16" y1="561.77" x2="19.6" y2="561.77" stroke="#77727d" stroke-width="0.8"/><line x1="16" y1="566.68" x2="19.6" y2="566.68" stroke="#77727d" stroke-width="0.8"/><line x1="16" y1="571.59" x2="19.6" y2="571.59" stroke="#77727d" stroke-width="0.8"/><line x1="16" y1="576.49" x2="19.6" y2="576.49" stroke="#77727d" stroke-width="0.8"/><line x1="16" y1="542.15" x2="26" y2="542.15" stroke="#77727d" stroke-width="0.8"/><text transform="translate(25.1,542.35) rotate(-90)" text-anchor="end" font-size="6.6" fill="#e4e1e8" font-family="Liberation Sans" text-rendering="geometricPrecision">896</text><line x1="16" y1="586.31" x2="19.6" y2="586.31" stroke="#77727d" stroke-width="0.8"/><line x1="16" y1="591.21" x2="19.6" y2="591.21" stroke="#77727d" stroke-width="0.8"/><line x1="16" y1="596.12" x2="19.6" y2="596.12" stroke="#77727d" stroke-width="0.8"/><line x1="16" y1="601.02" x2="19.6" y2="601.02" stroke="#77727d" stroke-width="0.8"/><line x1="16" y1="605.93" x2="19.6" y2="605.93" stroke="#77727d" stroke-width="0.8"/><line x1="16" y1="610.84" x2="19.6" y2="610.84" stroke="#77727d" stroke-width="0.8"/><line x1="16" y1="615.74" x2="19.6" y2="615.74" stroke="#77727d" stroke-width="0.8"/><line x1="16" y1="581.4" x2="26" y2="581.4" stroke="#77727d" stroke-width="0.8"/><text transform="translate(25.1,581.6) rotate(-90)" text-anchor="end" font-size="6.6" fill="#e4e1e8" font-family="Liberation Sans" text-rendering="geometricPrecision">960</text><line x1="16" y1="625.56" x2="19.6" y2="625.56" stroke="#77727d" stroke-width="0.8"/><line x1="16" y1="630.46" x2="19.6" y2="630.46" stroke="#77727d" stroke-width="0.8"/><line x1="16" y1="635.37" x2="19.6" y2="635.37" stroke="#77727d" stroke-width="0.8"/><line x1="16" y1="640.27" x2="19.6" y2="640.27" stroke="#77727d" stroke-width="0.8"/><line x1="16" y1="645.18" x2="19.6" y2="645.18" stroke="#77727d" stroke-width="0.8"/><line x1="16" y1="650.09" x2="19.6" y2="650.09" stroke="#77727d" stroke-width="0.8"/><line x1="16" y1="654.99" x2="19.6" y2="654.99" stroke="#77727d" stroke-width="0.8"/><line x1="16" y1="620.65" x2="26" y2="620.65" stroke="#77727d" stroke-width="0.8"/><text transform="translate(25.1,620.85) rotate(-90)" text-anchor="end" font-size="6.6" fill="#e4e1e8" font-family="Liberation Sans" text-rendering="geometricPrecision">1,024</text><line x1="16" y1="664.81" x2="19.6" y2="664.81" stroke="#77727d" stroke-width="0.8"/><line x1="16" y1="669.71" x2="19.6" y2="669.71" stroke="#77727d" stroke-width="0.8"/><line x1="16" y1="674.62" x2="19.6" y2="674.62" stroke="#77727d" stroke-width="0.8"/><line x1="16" y1="679.52" x2="19.6" y2="679.52" stroke="#77727d" stroke-width="0.8"/><line x1="16" y1="684.43" x2="19.6" y2="684.43" stroke="#77727d" stroke-width="0.8"/><line x1="16" y1="689.34" x2="19.6" y2="689.34" stroke="#77727d" stroke-width="0.8"/><line x1="16" y1="694.24" x2="19.6" y2="694.24" stroke="#77727d" stroke-width="0.8"/><line x1="16" y1="659.9" x2="26" y2="659.9" stroke="#77727d" stroke-width="0.8"/><text transform="translate(25.1,660.1) rotate(-90)" text-anchor="end" font-size="6.6" fill="#e4e1e8" font-family="Liberation Sans" text-rendering="geometricPrecision">1,088</text><line x1="16" y1="704.06" x2="19.6" y2="704.06" stroke="#77727d" stroke-width="0.8"/><line x1="16" y1="708.96" x2="19.6" y2="708.96" stroke="#77727d" stroke-width="0.8"/><line x1="16" y1="713.87" x2="19.6" y2="713.87" stroke="#77727d" stroke-width="0.8"/><line x1="16" y1="718.77" x2="19.6" y2="718.77" stroke="#77727d" stroke-width="0.8"/><line x1="16" y1="723.68" x2="19.6" y2="723.68" stroke="#77727d" stroke-width="0.8"/><line x1="16" y1="728.59" x2="19.6" y2="728.59" stroke="#77727d" stroke-width="0.8"/><line x1="16" y1="733.49" x2="19.6" y2="733.49" stroke="#77727d" stroke-width="0.8"/><line x1="16" y1="699.15" x2="26" y2="699.15" stroke="#77727d" stroke-width="0.8"/><text transform="translate(25.1,699.35) rotate(-90)" text-anchor="end" font-size="6.6" fill="#e4e1e8" font-family="Liberation Sans" text-rendering="geometricPrecision">1,152</text><line x1="16" y1="743.31" x2="19.6" y2="743.31" stroke="#77727d" stroke-width="0.8"/><line x1="16" y1="748.21" x2="19.6" y2="748.21" stroke="#77727d" stroke-width="0.8"/><line x1="16" y1="753.12" x2="19.6" y2="753.12" stroke="#77727d" stroke-width="0.8"/><line x1="16" y1="758.02" x2="19.6" y2="758.02" stroke="#77727d" stroke-width="0.8"/><line x1="16" y1="762.93" x2="19.6" y2="762.93" stroke="#77727d" stroke-width="0.8"/><line x1="16" y1="767.84" x2="19.6" y2="767.84" stroke="#77727d" stroke-width="0.8"/><line x1="16" y1="772.74" x2="19.6" y2="772.74" stroke="#77727d" stroke-width="0.8"/><line x1="16" y1="738.4" x2="26" y2="738.4" stroke="#77727d" stroke-width="0.8"/><text transform="translate(25.1,738.6) rotate(-90)" text-anchor="end" font-size="6.6" fill="#e4e1e8" font-family="Liberation Sans" text-rendering="geometricPrecision">1,216</text><text transform="translate(25.1,777.85) rotate(-90)" text-anchor="end" font-size="6.6" fill="#e4e1e8" font-family="Liberation Sans" text-rendering="geometricPrecision">1,280</text><text transform="translate(25.1,817.1) rotate(-90)" text-anchor="end" font-size="6.6" fill="#e4e1e8" font-family="Liberation Sans" text-rendering="geometricPrecision">1,344</text></svg>
<svg class="a" style="left:27px;top:96.5px" width="1013" height="678.5" viewBox="27 96.5 1013 678.5">
<rect x="27" y="96.5" width="1013" height="678.5" fill="#fff"/>
<line x1="29.06" y1="96.5" x2="29.06" y2="775" stroke="#fafafe" stroke-width="1"/>
<line x1="41.33" y1="96.5" x2="41.33" y2="775" stroke="#fafafe" stroke-width="1"/>
<line x1="53.59" y1="96.5" x2="53.59" y2="775" stroke="#fafafe" stroke-width="1"/>
<line x1="78.13" y1="96.5" x2="78.13" y2="775" stroke="#fafafe" stroke-width="1"/>
<line x1="90.39" y1="96.5" x2="90.39" y2="775" stroke="#fafafe" stroke-width="1"/>
<line x1="102.66" y1="96.5" x2="102.66" y2="775" stroke="#fafafe" stroke-width="1"/>
<line x1="114.92" y1="96.5" x2="114.92" y2="775" stroke="#fafafe" stroke-width="1"/>
<line x1="139.46" y1="96.5" x2="139.46" y2="775" stroke="#fafafe" stroke-width="1"/>
<line x1="151.72" y1="96.5" x2="151.72" y2="775" stroke="#fafafe" stroke-width="1"/>
<line x1="163.99" y1="96.5" x2="163.99" y2="775" stroke="#fafafe" stroke-width="1"/>
<line x1="176.25" y1="96.5" x2="176.25" y2="775" stroke="#fafafe" stroke-width="1"/>
<line x1="200.79" y1="96.5" x2="200.79" y2="775" stroke="#fafafe" stroke-width="1"/>
<line x1="213.05" y1="96.5" x2="213.05" y2="775" stroke="#fafafe" stroke-width="1"/>
<line x1="225.32" y1="96.5" x2="225.32" y2="775" stroke="#fafafe" stroke-width="1"/>
<line x1="237.58" y1="96.5" x2="237.58" y2="775" stroke="#fafafe" stroke-width="1"/>
<line x1="262.12" y1="96.5" x2="262.12" y2="775" stroke="#fafafe" stroke-width="1"/>
<line x1="274.38" y1="96.5" x2="274.38" y2="775" stroke="#fafafe" stroke-width="1"/>
<line x1="286.65" y1="96.5" x2="286.65" y2="775" stroke="#fafafe" stroke-width="1"/>
<line x1="298.91" y1="96.5" x2="298.91" y2="775" stroke="#fafafe" stroke-width="1"/>
<line x1="323.45" y1="96.5" x2="323.45" y2="775" stroke="#fafafe" stroke-width="1"/>
<line x1="335.71" y1="96.5" x2="335.71" y2="775" stroke="#fafafe" stroke-width="1"/>
<line x1="347.98" y1="96.5" x2="347.98" y2="775" stroke="#fafafe" stroke-width="1"/>
<line x1="360.24" y1="96.5" x2="360.24" y2="775" stroke="#fafafe" stroke-width="1"/>
<line x1="384.78" y1="96.5" x2="384.78" y2="775" stroke="#fafafe" stroke-width="1"/>
<line x1="397.04" y1="96.5" x2="397.04" y2="775" stroke="#fafafe" stroke-width="1"/>
<line x1="409.31" y1="96.5" x2="409.31" y2="775" stroke="#fafafe" stroke-width="1"/>
<line x1="421.57" y1="96.5" x2="421.57" y2="775" stroke="#fafafe" stroke-width="1"/>
<line x1="446.11" y1="96.5" x2="446.11" y2="775" stroke="#fafafe" stroke-width="1"/>
<line x1="458.37" y1="96.5" x2="458.37" y2="775" stroke="#fafafe" stroke-width="1"/>
<line x1="470.64" y1="96.5" x2="470.64" y2="775" stroke="#fafafe" stroke-width="1"/>
<line x1="482.9" y1="96.5" x2="482.9" y2="775" stroke="#fafafe" stroke-width="1"/>
<line x1="507.44" y1="96.5" x2="507.44" y2="775" stroke="#fafafe" stroke-width="1"/>
<line x1="519.7" y1="96.5" x2="519.7" y2="775" stroke="#fafafe" stroke-width="1"/>
<line x1="531.97" y1="96.5" x2="531.97" y2="775" stroke="#fafafe" stroke-width="1"/>
<line x1="544.23" y1="96.5" x2="544.23" y2="775" stroke="#fafafe" stroke-width="1"/>
<line x1="568.77" y1="96.5" x2="568.77" y2="775" stroke="#fafafe" stroke-width="1"/>
<line x1="581.03" y1="96.5" x2="581.03" y2="775" stroke="#fafafe" stroke-width="1"/>
<line x1="593.3" y1="96.5" x2="593.3" y2="775" stroke="#fafafe" stroke-width="1"/>
<line x1="605.56" y1="96.5" x2="605.56" y2="775" stroke="#fafafe" stroke-width="1"/>
<line x1="630.1" y1="96.5" x2="630.1" y2="775" stroke="#fafafe" stroke-width="1"/>
<line x1="642.36" y1="96.5" x2="642.36" y2="775" stroke="#fafafe" stroke-width="1"/>
<line x1="654.63" y1="96.5" x2="654.63" y2="775" stroke="#fafafe" stroke-width="1"/>
<line x1="666.89" y1="96.5" x2="666.89" y2="775" stroke="#fafafe" stroke-width="1"/>
<line x1="691.43" y1="96.5" x2="691.43" y2="775" stroke="#fafafe" stroke-width="1"/>
<line x1="703.69" y1="96.5" x2="703.69" y2="775" stroke="#fafafe" stroke-width="1"/>
<line x1="715.96" y1="96.5" x2="715.96" y2="775" stroke="#fafafe" stroke-width="1"/>
<line x1="728.22" y1="96.5" x2="728.22" y2="775" stroke="#fafafe" stroke-width="1"/>
<line x1="752.76" y1="96.5" x2="752.76" y2="775" stroke="#fafafe" stroke-width="1"/>
<line x1="765.02" y1="96.5" x2="765.02" y2="775" stroke="#fafafe" stroke-width="1"/>
<line x1="777.29" y1="96.5" x2="777.29" y2="775" stroke="#fafafe" stroke-width="1"/>
<line x1="789.55" y1="96.5" x2="789.55" y2="775" stroke="#fafafe" stroke-width="1"/>
<line x1="814.09" y1="96.5" x2="814.09" y2="775" stroke="#fafafe" stroke-width="1"/>
<line x1="826.35" y1="96.5" x2="826.35" y2="775" stroke="#fafafe" stroke-width="1"/>
<line x1="838.62" y1="96.5" x2="838.62" y2="775" stroke="#fafafe" stroke-width="1"/>
<line x1="850.88" y1="96.5" x2="850.88" y2="775" stroke="#fafafe" stroke-width="1"/>
<line x1="875.42" y1="96.5" x2="875.42" y2="775" stroke="#fafafe" stroke-width="1"/>
<line x1="887.68" y1="96.5" x2="887.68" y2="775" stroke="#fafafe" stroke-width="1"/>
<line x1="899.95" y1="96.5" x2="899.95" y2="775" stroke="#fafafe" stroke-width="1"/>
<line x1="912.21" y1="96.5" x2="912.21" y2="775" stroke="#fafafe" stroke-width="1"/>
<line x1="936.75" y1="96.5" x2="936.75" y2="775" stroke="#fafafe" stroke-width="1"/>
<line x1="949.01" y1="96.5" x2="949.01" y2="775" stroke="#fafafe" stroke-width="1"/>
<line x1="961.28" y1="96.5" x2="961.28" y2="775" stroke="#fafafe" stroke-width="1"/>
<line x1="973.54" y1="96.5" x2="973.54" y2="775" stroke="#fafafe" stroke-width="1"/>
<line x1="998.08" y1="96.5" x2="998.08" y2="775" stroke="#fafafe" stroke-width="1"/>
<line x1="1010.34" y1="96.5" x2="1010.34" y2="775" stroke="#fafafe" stroke-width="1"/>
<line x1="1022.61" y1="96.5" x2="1022.61" y2="775" stroke="#fafafe" stroke-width="1"/>
<line x1="1034.87" y1="96.5" x2="1034.87" y2="775" stroke="#fafafe" stroke-width="1"/>
<line x1="27" y1="101.83" x2="1040" y2="101.83" stroke="#fafafe" stroke-width="1"/>
<line x1="27" y1="126.37" x2="1040" y2="126.37" stroke="#fafafe" stroke-width="1"/>
<line x1="27" y1="138.63" x2="1040" y2="138.63" stroke="#fafafe" stroke-width="1"/>
<line x1="27" y1="150.9" x2="1040" y2="150.9" stroke="#fafafe" stroke-width="1"/>
<line x1="27" y1="163.16" x2="1040" y2="163.16" stroke="#fafafe" stroke-width="1"/>
<line x1="27" y1="187.7" x2="1040" y2="187.7" stroke="#fafafe" stroke-width="1"/>
<line x1="27" y1="199.96" x2="1040" y2="199.96" stroke="#fafafe" stroke-width="1"/>
<line x1="27" y1="212.23" x2="1040" y2="212.23" stroke="#fafafe" stroke-width="1"/>
<line x1="27" y1="224.49" x2="1040" y2="224.49" stroke="#fafafe" stroke-width="1"/>
<line x1="27" y1="249.03" x2="1040" y2="249.03" stroke="#fafafe" stroke-width="1"/>
<line x1="27" y1="261.29" x2="1040" y2="261.29" stroke="#fafafe" stroke-width="1"/>
<line x1="27" y1="273.56" x2="1040" y2="273.56" stroke="#fafafe" stroke-width="1"/>
<line x1="27" y1="285.82" x2="1040" y2="285.82" stroke="#fafafe" stroke-width="1"/>
<line x1="27" y1="310.36" x2="1040" y2="310.36" stroke="#fafafe" stroke-width="1"/>
<line x1="27" y1="322.62" x2="1040" y2="322.62" stroke="#fafafe" stroke-width="1"/>
<line x1="27" y1="334.89" x2="1040" y2="334.89" stroke="#fafafe" stroke-width="1"/>
<line x1="27" y1="347.15" x2="1040" y2="347.15" stroke="#fafafe" stroke-width="1"/>
<line x1="27" y1="371.69" x2="1040" y2="371.69" stroke="#fafafe" stroke-width="1"/>
<line x1="27" y1="383.95" x2="1040" y2="383.95" stroke="#fafafe" stroke-width="1"/>
<line x1="27" y1="396.22" x2="1040" y2="396.22" stroke="#fafafe" stroke-width="1"/>
<line x1="27" y1="408.48" x2="1040" y2="408.48" stroke="#fafafe" stroke-width="1"/>
<line x1="27" y1="433.02" x2="1040" y2="433.02" stroke="#fafafe" stroke-width="1"/>
<line x1="27" y1="445.28" x2="1040" y2="445.28" stroke="#fafafe" stroke-width="1"/>
<line x1="27" y1="457.55" x2="1040" y2="457.55" stroke="#fafafe" stroke-width="1"/>
<line x1="27" y1="469.81" x2="1040" y2="469.81" stroke="#fafafe" stroke-width="1"/>
<line x1="27" y1="494.35" x2="1040" y2="494.35" stroke="#fafafe" stroke-width="1"/>
<line x1="27" y1="506.61" x2="1040" y2="506.61" stroke="#fafafe" stroke-width="1"/>
<line x1="27" y1="518.88" x2="1040" y2="518.88" stroke="#fafafe" stroke-width="1"/>
<line x1="27" y1="531.14" x2="1040" y2="531.14" stroke="#fafafe" stroke-width="1"/>
<line x1="27" y1="555.68" x2="1040" y2="555.68" stroke="#fafafe" stroke-width="1"/>
<line x1="27" y1="567.94" x2="1040" y2="567.94" stroke="#fafafe" stroke-width="1"/>
<line x1="27" y1="580.21" x2="1040" y2="580.21" stroke="#fafafe" stroke-width="1"/>
<line x1="27" y1="592.47" x2="1040" y2="592.47" stroke="#fafafe" stroke-width="1"/>
<line x1="27" y1="617.01" x2="1040" y2="617.01" stroke="#fafafe" stroke-width="1"/>
<line x1="27" y1="629.27" x2="1040" y2="629.27" stroke="#fafafe" stroke-width="1"/>
<line x1="27" y1="641.54" x2="1040" y2="641.54" stroke="#fafafe" stroke-width="1"/>
<line x1="27" y1="653.8" x2="1040" y2="653.8" stroke="#fafafe" stroke-width="1"/>
<line x1="27" y1="678.34" x2="1040" y2="678.34" stroke="#fafafe" stroke-width="1"/>
<line x1="27" y1="690.6" x2="1040" y2="690.6" stroke="#fafafe" stroke-width="1"/>
<line x1="27" y1="702.87" x2="1040" y2="702.87" stroke="#fafafe" stroke-width="1"/>
<line x1="27" y1="715.13" x2="1040" y2="715.13" stroke="#fafafe" stroke-width="1"/>
<line x1="27" y1="739.67" x2="1040" y2="739.67" stroke="#fafafe" stroke-width="1"/>
<line x1="27" y1="751.93" x2="1040" y2="751.93" stroke="#fafafe" stroke-width="1"/>
<line x1="27" y1="764.2" x2="1040" y2="764.2" stroke="#fafafe" stroke-width="1"/>
<line x1="65.86" y1="96.5" x2="65.86" y2="775" stroke="#dcdffb" stroke-width="1.1"/>
<line x1="127.19" y1="96.5" x2="127.19" y2="775" stroke="#dcdffb" stroke-width="1.1"/>
<line x1="188.52" y1="96.5" x2="188.52" y2="775" stroke="#dcdffb" stroke-width="1.1"/>
<line x1="249.85" y1="96.5" x2="249.85" y2="775" stroke="#dcdffb" stroke-width="1.1"/>
<line x1="311.18" y1="96.5" x2="311.18" y2="775" stroke="#dcdffb" stroke-width="1.1"/>
<line x1="372.51" y1="96.5" x2="372.51" y2="775" stroke="#dcdffb" stroke-width="1.1"/>
<line x1="433.84" y1="96.5" x2="433.84" y2="775" stroke="#dcdffb" stroke-width="1.1"/>
<line x1="495.17" y1="96.5" x2="495.17" y2="775" stroke="#dcdffb" stroke-width="1.1"/>
<line x1="556.5" y1="96.5" x2="556.5" y2="775" stroke="#dcdffb" stroke-width="1.1"/>
<line x1="617.83" y1="96.5" x2="617.83" y2="775" stroke="#dcdffb" stroke-width="1.1"/>
<line x1="679.16" y1="96.5" x2="679.16" y2="775" stroke="#dcdffb" stroke-width="1.1"/>
<line x1="740.49" y1="96.5" x2="740.49" y2="775" stroke="#dcdffb" stroke-width="1.1"/>
<line x1="801.82" y1="96.5" x2="801.82" y2="775" stroke="#dcdffb" stroke-width="1.1"/>
<line x1="863.15" y1="96.5" x2="863.15" y2="775" stroke="#dcdffb" stroke-width="1.1"/>
<line x1="924.48" y1="96.5" x2="924.48" y2="775" stroke="#dcdffb" stroke-width="1.1"/>
<line x1="985.81" y1="96.5" x2="985.81" y2="775" stroke="#dcdffb" stroke-width="1.1"/>
<line x1="27" y1="114.1" x2="1040" y2="114.1" stroke="#dcdffb" stroke-width="1.1"/>
<line x1="27" y1="175.43" x2="1040" y2="175.43" stroke="#dcdffb" stroke-width="1.1"/>
<line x1="27" y1="236.76" x2="1040" y2="236.76" stroke="#dcdffb" stroke-width="1.1"/>
<line x1="27" y1="298.09" x2="1040" y2="298.09" stroke="#dcdffb" stroke-width="1.1"/>
<line x1="27" y1="359.42" x2="1040" y2="359.42" stroke="#dcdffb" stroke-width="1.1"/>
<line x1="27" y1="420.75" x2="1040" y2="420.75" stroke="#dcdffb" stroke-width="1.1"/>
<line x1="27" y1="482.08" x2="1040" y2="482.08" stroke="#dcdffb" stroke-width="1.1"/>
<line x1="27" y1="543.41" x2="1040" y2="543.41" stroke="#dcdffb" stroke-width="1.1"/>
<line x1="27" y1="604.74" x2="1040" y2="604.74" stroke="#dcdffb" stroke-width="1.1"/>
<line x1="27" y1="666.07" x2="1040" y2="666.07" stroke="#dcdffb" stroke-width="1.1"/>
<line x1="27" y1="727.4" x2="1040" y2="727.4" stroke="#dcdffb" stroke-width="1.1"/>
<line x1="343.6" y1="96.5" x2="343.6" y2="775" stroke="#f27b7b" stroke-width="1.1"/>
<line x1="27" y1="420.3" x2="1040" y2="420.3" stroke="#f27b7b" stroke-width="1.1"/>
<defs><clipPath id="cc"><rect x="27" y="96.5" width="1013" height="678.5"/></clipPath></defs>
<g clip-path="url(#cc)">
<!-- star fill -->
<path fill="#f6f4f9" stroke="none" d="M716.1 666.9 L749.2 739.7 L819.8 750.8 L752.8 776 L672.4 776 L611.9 750.2 L682.3 739.7 Z"/>
<!-- pink blob -->
<path fill="#f0a8f5" fill-opacity="0.8" d="M1041.0 417.0 C1035.8 420.8 1017.4 432.9 1010.0 440.0 C1002.6 447.1 1000.2 453.0 996.8 459.6 C993.4 466.2 991.3 470.8 989.8 479.4 C988.3 488.0 987.5 499.1 987.8 511.0 C988.0 522.9 988.3 536.4 991.3 550.9 C994.2 565.4 999.6 580.7 1005.5 598.0 C1011.4 615.3 1021.5 637.6 1026.7 654.6 C1031.9 671.6 1035.3 688.1 1036.5 700.0 C1037.7 711.9 1036.8 718.8 1034.0 726.0 C1031.2 733.2 1026.5 739.2 1020.0 743.0 C1013.5 746.8 1010.0 747.4 995.0 748.5 C980.0 749.6 956.5 749.3 930.0 749.8 C903.5 750.3 860.7 750.9 835.7 751.3 C810.7 751.7 796.1 751.6 780.0 752.2 C763.9 752.8 752.4 753.2 738.9 755.0 C725.4 756.8 710.3 759.9 699.2 763.1 C688.1 766.3 679.8 770.9 672.4 774.0 C665.0 777.1 657.9 780.7 655.0 782.0 L1041 782 Z"/>
<!-- star lines -->
<g fill="none" stroke="#eda6f4" stroke-width="0.8">
<path d="M716.1 666.9 L749.2 739.7 L819.8 750.8 L752.8 776 M672.4 776 L611.9 750.2 L682.3 739.7"/>
<path d="M716.1 666.9 V776 M682.3 739.7 L705.2 776 M749.2 739.7 L727 776"/>
</g>
<!-- red ring + ribbon -->
<path fill="#ee4424" d="M48 269.9 L80.8 318 L49.2 308.3 L47.3 340.6 L20 300 L20 275 Z"/>
<path fill="#ee4424" fill-rule="evenodd" stroke="#fff" stroke-width="0.5" d="M79 208.3 A75.2 75.2 0 1 1 -71.4 208.3 A75.2 75.2 0 1 1 79 208.3 Z M50.4 208.3 A46.6 46.6 0 1 0 -42.8 208.3 A46.6 46.6 0 1 0 50.4 208.3 Z"/>
<!-- connector -->
<g fill="none" stroke="#58585a" stroke-width="4.3" stroke-linecap="round" stroke-linejoin="round">
<circle cx="312.9" cy="149.6" r="11.2"/>
<path d="M270 149.8 H301.5" stroke-linecap="butt"/>
<path d="M270 168.6 H291 Q293.3 168.6 293.3 171 V177.5"/>
<path d="M312.9 160.8 V192" stroke-linecap="butt"/>
</g>
<!-- dashed arc -->
<path fill="none" stroke="#ea3a1f" stroke-width="2.2" stroke-dasharray="12 3.4 2.6 3.4" d="M20 445.8 A144.1 144.1 0 0 0 176 411.9"/>
<!-- red star -->
<g fill="#ee4424">
<path d="M994.3 112.9 L1026 112.9 L1010.1 124.3 Z"/>
<path d="M1026 112.9 L1040 138.7 L1024.5 130.7 Z"/>
<path d="M1040 138.7 L1026 164.5 L1024.5 147.1 Z"/>
<path d="M1026 164.5 L994.3 164.5 L1010.1 154.1 Z"/>
<path d="M994.3 164.5 L977.9 138.9 L996.2 146.6 Z"/>
<path d="M977.9 138.9 L994.3 112.9 L996.2 131.2 Z"/>
<path d="M996.7 102 L1024.1 102 L1010.1 108.9 Z"/>
<path d="M981.8 109.9 L981.8 124.3 L967.4 131.2 Z"/>
<path d="M967.4 147.1 L981.8 154.1 L981.8 168.5 Z"/>
<path d="M997.5 178 L1010.1 169.3 L1022.7 178 Z"/>
<path d="M1038.4 109.9 L1038.4 124.3 L1052.8 131.2 Z"/>
<path d="M1052.8 147.1 L1038.4 154.1 L1038.4 168.5 Z"/>
</g>
</g>

<!-- ===== female model ===== -->
<g fill="#fff" stroke="#3c3c3c" stroke-width="0.75" stroke-linejoin="round">
<path d="M536.5 177 C536 182 535 185 532 186.5 C530 188 527 189 525.5 189.8 L529 200 L521.5 262 L522.5 318 L543.5 318 L564.5 320 L565.5 262 L558 200 L562.5 189.8 C561 189 557 188 555 186.5 C552 185 551 182 550.5 177 Z"/>
<path d="M543.4 151.3 C536.5 151.3 532.3 155.5 532.3 162.5 C532.3 167 533 171 535 174.5 C537.5 178 540 179.5 543.4 179.5 C546.8 179.5 549.3 178 551.8 174.5 C553.8 171 554.5 167 554.5 162.5 C554.5 155.5 550.3 151.3 543.4 151.3 Z"/>
<path fill="none" d="M532.5 163 C530.5 163 530.3 167.5 532.7 168.5 M554.3 163 C556.3 163 556.5 167.5 554.1 168.5"/>
</g>
<g fill="#fff" stroke="#3c3c3c" stroke-width="0.75" stroke-linejoin="round">
<path d="M522.7 321.3 C523.0 323.6 523.9 330.2 524.7 335.2 C525.5 340.2 526.7 345.8 527.7 351.1 C528.7 356.4 530.5 362.4 530.7 367.0 C530.9 371.6 529.4 375.6 528.7 378.9 C528.0 382.2 526.9 384.5 526.7 386.8 C526.5 389.1 526.7 391.3 527.7 392.8 C528.7 394.3 530.7 395.3 532.7 395.8 C534.7 396.3 538.1 398.0 539.6 395.8 C541.1 393.6 541.6 387.7 541.6 382.9 C541.6 378.1 540.1 372.3 539.6 367.0 C539.1 361.7 538.9 356.4 538.6 351.1 C538.3 345.8 537.7 339.8 537.6 335.2 C537.5 330.6 538.1 325.3 538.2 323.3"/>
<path d="M547.5 323.3 C547.8 325.3 549.2 330.6 549.5 335.2 C549.8 339.8 549.7 345.8 549.5 351.1 C549.3 356.4 549.0 361.7 548.5 367.0 C548.0 372.3 546.7 378.1 546.5 382.9 C546.3 387.7 546.0 393.6 547.5 395.8 C549.0 398.0 553.4 396.3 555.5 395.8 C557.6 395.3 559.8 394.3 560.4 392.8 C561.0 391.3 559.7 389.1 559.4 386.8 C559.1 384.5 559.0 382.2 558.5 378.9 C558.0 375.6 556.2 371.6 556.5 367.0 C556.8 362.4 559.2 356.4 560.4 351.1 C561.5 345.8 562.6 340.2 563.4 335.2 C564.2 330.2 565.1 323.6 565.4 321.3"/>
</g>
<!-- tank top -->
<path fill="#fff67d" stroke="#f39a2c" stroke-width="1.6" stroke-linejoin="round" d="M525.5 189.6 C528 188.5 531 188 534.2 188 C537 189.5 540 192.4 543.5 192.4 C547 192.4 550.5 189.5 554.1 188 C557 188 560 188.8 562.8 189.9 C562 193 562 196.5 562.2 199.8 C562.5 203.5 563.5 206.5 564.7 209.2 C566 211.5 567.5 213 568.1 214.8 C568.5 220 567.5 228 566.5 236 C566 245 568.5 253 569.5 261 L519.3 261 C520 250 521 240 520.8 232 C520.5 224 519.8 218 520.6 214.8 C521.5 212.5 523 210.5 524.3 207.9 C525.8 205 526.5 202.5 526.5 199.8 C526.5 196 525.5 192.5 525.5 189.6 Z"/>
<path fill="none" stroke="#f39a2c" stroke-width="1.5" d="M530.5 189.9 C531.5 200 536 208.9 544.2 208.9 C552 208.9 557 200 558.1 189.9"/>
<!-- skirt -->
<path fill="#d0dadf" stroke="#2c5868" stroke-width="1.6" stroke-dasharray="3.6 1.7" stroke-linejoin="round" d="M530.7 249.5 L566.4 249.5 C572 262 580 285 587.6 315.8 C584 318 580 318.6 577.3 318.4 C573 320 570 320.4 566.4 320.4 C562 321.5 560 321.7 556.5 321.7 L537.6 321.7 C533 321.5 530 321 526.7 321 C522 320 519 319.6 515.8 319.4 C513 318 510 317 507.5 315.4 C514 290 523 265 530.7 249.5 Z"/>
<path fill="none" stroke="#2c5868" stroke-width="1.5" stroke-dasharray="3.6 1.7" d="M537.6 268.8 C533 290 529 305 526.7 320.4 M556.5 265.8 C560 285 564 303 566.4 319.4 M522.7 292.6 C520 302 517.5 310 515.8 317.4 M542.6 285.6 C540.5 300 538.5 310 537.6 321.3 M552.5 286.6 C554 300 555.5 310 556.5 321.3 M573.3 292.6 C575 302 576.5 310 577.3 316.4"/>

<g fill="#fff" stroke="#3c3c3c" stroke-width="0.75" stroke-linejoin="round">
<path stroke="none" d="M517.5 190.5 C513.5 194 512.5 202 511.5 212 C510.5 220 509.5 226 507.4 232 C505 240 502.5 248 501.2 257.3 C501.5 263 505 269 509 273 C511 275.5 513 277.5 514.5 277.5 C516 277 515 274.5 513 272 C511.5 269.5 511 266 511.5 263 C510 260 507.5 258 506.8 256.4 C508.5 248 511.5 242 514.5 236 L515.5 220 L517 200 Z"/>
<path fill="none" d="M526 189.6 C522 189.5 519.5 189.5 517.5 190.5 C513.5 194 512.5 202 511.5 212 C510.5 220 509.5 226 507.4 232 C505 240 502.5 248 501.2 257.3 C501.5 263 505 269 509 273 C511 275.5 513 277.5 514.5 277.5 C516 277 515 274.5 513 272 C511.5 269.5 511 266 511.5 263 C510 260 507.5 258 506.8 256.4 C508.5 248 511.5 242 514.5 236"/>
<path stroke="none" d="M569.5 190.5 C573.5 194 574.5 202 575.5 212 C576.5 220 577.5 226 579.6 232 C582 240 586 248 587.6 257.3 C587.3 263 584 269 580 273 C578 275.5 576 277.5 574.5 277.5 C573 277 574 274.5 576 272 C577.5 269.5 578 266 577.5 263 C579 260 581.5 258 582 256.4 C580.5 248 577.5 242 574.5 236 L571.5 220 L570 200 Z"/>
<path fill="none" d="M562 189.7 C565 189.5 567.5 189.5 569.5 190.5 C573.5 194 574.5 202 575.5 212 C576.5 220 577.5 226 579.6 232 C582 240 586 248 587.6 257.3 C587.3 263 584 269 580 273 C578 275.5 576 277.5 574.5 277.5 C573 277 574 274.5 576 272 C577.5 269.5 578 266 577.5 263 C579 260 581.5 258 582 256.4 C580.5 248 577.5 242 574.5 236"/>
<path fill="none" stroke-width="0.6" d="M521.5 229 L520.8 238 M565.5 229 L566.2 238"/>
</g>
<!-- ===== sweatshirt ===== -->
<g fill="#c2bca6" stroke="#3b3b35" stroke-width="0.9" stroke-linejoin="round">
<path d="M807.2 152.6 C800 154 780 163 732.5 187.3 C727 190 722 196 718 203 C708 222 695 250 685.6 274 C687 300 690 330 693.9 347.1 L695.9 353.1 L696.6 360 Q697 362.4 699.5 362.4 L729.5 362.4 Q732 362.4 732.4 360 L733.6 353.1 L734.6 347.1 C736.5 320 738.5 290 741.2 263.7 L741.2 248 L741.2 263.7 L749.9 262 C751 310 752.5 360 753.3 392.5 Q753.5 395.6 756.5 395.6 L920.5 395.6 Q923.3 395.6 923.5 392.5 C924.5 360 926 310 927.5 262 L935.6 263.7 C938 290 940 320 942.2 347.1 L943.2 353.1 L944.4 360 Q944.8 362.4 947.3 362.4 L977.3 362.4 Q979.8 362.4 980.2 360 L980.9 353.1 L982.9 347.1 C987 320 990 300 991.2 274 C982 250 969 222 959 203 C955 196 951 190 946 189 C897 163 880 155 870.6 153.2 C868 150.3 862 150.3 859.5 152.5 C856 155.8 850 158.6 838.8 158.6 C827.6 158.6 821.6 155.8 818.1 152.5 C815.6 150.3 809.6 150.3 807.2 152.6 Z"/>
<path fill="none" d="M741.2 248 L741.2 263.7 M935.6 248 L935.6 263.7"/>
<path fill="none" d="M807.4 153.4 C812 170 824 179.5 838.8 179.5 C853.6 179.5 865.6 170 870.4 153.4"/>
<path fill="none" d="M819.8 154.9 C822 166 830 171.2 838.8 171.2 C847.6 171.2 855.6 166 857.8 154.9"/>
<path fill="none" d="M817.6 173.4 C790 185 760 215 749.9 262 M859.2 173.4 C888 185 918 215 928.7 262"/>
<path fill="none" d="M753.3 388.7 C810 385.5 866 385.5 923.5 388.7 M695.9 353.1 C708 350.3 722 350.3 733.6 353.1 M943.2 353.1 C955 350.3 969 350.3 980.9 353.1"/>
</g>
<text x="864.4" y="236.2" font-size="10.6" fill="#8b887f" font-family="Liberation Sans">Polõn</text>

<!-- ===== male model ===== -->
<g fill="#fff" stroke="#3c3c3c" stroke-width="0.75" stroke-linejoin="round">
<path d="M192.4 520.5 C192 525 191.8 528 190.5 530.5 C184 534 174 534.5 168.3 536.9 C163 539 162.3 544 162 550 C161.7 560 161.5 571 160.5 585 C159.5 600 159 618 158.9 633.5 C158.5 640 162 646 168 649 C170.5 650 171.5 647 169.5 643 C168 640 168 636 170.5 634 L173.4 638 L201 644 L228 638 L231 634 C233.5 636 233.5 640 232 643 C230 647 231 650 233.5 649 C239.5 646 243 640 242.6 633.5 C242.5 618 242 600 241 585 C240 571 239.8 560 239.5 550 C239.2 544 238.5 539 233.2 536.9 C227.5 534.5 217.5 534 211 530.5 C209.7 528 209.5 525 209.1 520.5 Z"/>
<path d="M200.7 496 C194 496 188.5 499 188.5 506 C188.5 511 189.5 515 191.5 518.5 C194 522.5 197 524.3 200.7 524.3 C204.4 524.3 207.4 522.5 209.9 518.5 C211.9 515 212.9 511 212.9 506 C212.9 499 207.4 496 200.7 496 Z"/>
<path fill="none" d="M188.8 507 C186.5 507 186.5 512 189 513 M212.6 507 C215 507 215 512 212.4 513"/>
<path fill="none" d="M171.8 536.9 C173 546 174 556 174.1 566.7 C174.6 580 175 592 175.2 603.4 M229.6 536.9 C228.4 546 227.4 556 227.3 566.7 C226.8 580 226.4 592 226.2 603.4 M174.1 554.1 C181 558 188 560 194.7 559.9 M206.7 559.9 C213.4 560 220.4 558 227.3 554.1"/>
<path fill="none" d="M184.6 670 C185 674 185.5 677 188 679 M216.8 670 C216.4 674 215.9 677 213.4 679 M178 670 C178.3 673 178.6 675 179.5 676 M223.4 670 C223.1 673 222.8 675 221.9 676"/>
</g>
<g fill="#fff" stroke="#3c3c3c" stroke-width="0.75" stroke-linejoin="round">
<path d="M173.4 638.0 C174.0 642.8 175.7 658.8 176.8 667.0 C177.9 675.2 179.7 681.4 180.1 687.0 C180.5 692.6 178.8 694.8 179.0 700.4 C179.2 706.0 180.1 714.2 181.2 720.5 C182.3 726.8 184.8 734.3 185.7 738.4 C186.6 742.5 187.6 742.4 186.8 745.0 C186.1 747.6 183.0 751.4 181.2 754.0 C179.3 756.6 176.2 759.0 175.7 760.7 C175.1 762.4 176.8 763.2 177.9 764.0 C179.0 764.8 179.6 765.1 182.4 765.2 C185.2 765.3 192.4 766.2 194.6 764.7 C196.8 763.2 195.6 759.9 195.8 756.3 C196.0 752.7 196.0 748.5 195.8 742.9 C195.6 737.3 194.6 729.1 194.6 722.8 C194.6 716.5 195.8 710.6 195.8 705.0 C195.8 699.4 194.4 695.6 194.6 689.3 C194.8 683.0 196.3 673.9 196.9 667.0 C197.5 660.1 197.8 651.2 198.0 648.0 Z"/>
<path d="M228.2 638.0 C227.6 642.8 225.9 658.8 224.8 667.0 C223.7 675.2 221.9 681.4 221.5 687.0 C221.1 692.6 222.8 694.8 222.6 700.4 C222.4 706.0 221.5 714.2 220.4 720.5 C219.3 726.8 216.8 734.3 215.9 738.4 C215.0 742.5 214.1 742.4 214.8 745.0 C215.6 747.6 218.6 751.4 220.4 754.0 C222.3 756.6 225.4 759.0 225.9 760.7 C226.5 762.4 224.8 763.2 223.7 764.0 C222.6 764.8 222.0 765.1 219.2 765.2 C216.4 765.3 209.2 766.2 207.0 764.7 C204.8 763.2 206.0 759.9 205.8 756.3 C205.6 752.7 205.6 748.5 205.8 742.9 C206.0 737.3 207.0 729.1 207.0 722.8 C207.0 716.5 205.8 710.6 205.8 705.0 C205.8 699.4 207.2 695.6 207.0 689.3 C206.8 683.0 205.3 673.9 204.7 667.0 C204.1 660.1 203.8 651.2 203.6 648.0 Z"/>
<path fill="none" d="M184.6 670.3 C186.5 673 187.5 676 189 679.2 M178.5 669 C178.8 672 179 674 179.8 676 M217 670.3 C215.1 673 214.1 676 212.6 679.2 M223.1 669 C222.8 672 222.6 674 221.8 676"/>
</g>
<!-- hat -->
<path fill="#e9ecec" d="M188.6 495.5 H213 V502 H188.6 Z"/>
<path fill="none" stroke="#b4baba" stroke-width="0.7" d="M190 497.6 H211.6 M190.5 499.6 H211"/>
<path fill="none" stroke="#3c3c3c" stroke-width="0.8" d="M193.2 496.3 L189.6 501.2 M208.4 496.3 L212 501.2"/>
<path fill="#a6aeae" d="M188.7 496 V484.8 C188.7 483 190.5 482.6 193 482.7 C196 482.8 198 484.4 200.8 484.4 C203.5 484.4 205.5 482.8 208.5 482.7 C211 482.6 212.8 483 212.8 484.8 V496 Z"/>
<path fill="none" stroke="#f4f6f6" stroke-width="0.75" d="M189.6 485.2 C193.5 488.6 208 488.6 212 485.4"/>
<path fill="#a6aeae" d="M176.8 494.5 C177.5 492.3 181 492 184.2 493.6 C189.5 499.5 195 502.4 200.8 502.4 C206.5 502.4 212 499.5 217.4 493.6 C220.6 492 224.6 492.3 225.2 494.5 C225.6 498.5 221 502.6 214 504.8 C209 506.4 205 506.8 200.8 506.8 C196.5 506.8 192.5 506.4 187.5 504.8 C180.5 502.6 176.4 498.5 176.8 494.5 Z"/>
<!-- underwear -->
<path fill="#c2bca6" stroke="#4a4940" stroke-width="1.3" stroke-linejoin="round" d="M166.1 611.2 L234.8 611.2 C236 614 235.5 618 234.8 622 C231 636 218 645 206.5 646.9 L194.5 646.9 C183 645 170 636 166 622 C165.3 618 165 614 166.1 611.2 Z"/>
<path fill="none" stroke="#4a4940" stroke-width="0.9" d="M166.5 614.2 L234.5 614.2 M168 618.5 C178 620 188 630 193.5 645.8 M232.8 618.5 C222.8 620 212.8 630 207 645.8 M170 620.5 C179 622.5 187.5 632 191.2 645.8 M230.8 620.5 C221.8 622.5 213.3 632 209.6 645.8"/>

<!-- ===== bowtie ===== -->
<g fill="#fff" stroke="#2b2a28" stroke-width="2" stroke-linejoin="round" stroke-linecap="round">
<path d="M537.3 487.2 C532 484.5 527 483.3 522.6 483.6 C521 486 520.7 490 520.7 494.9 C520.7 499.8 521 503.5 522.1 505.8 C527 506.2 532 505 537.3 502.3 Z"/>
<path d="M551.3 487.2 C556.6 484.5 561.6 483.3 566.4 483.6 C567.6 486 568 490 568 494.9 C568 499.8 567.6 503.5 566.6 505.8 C561.6 506.2 556.6 505 551.3 502.3 Z"/>
<ellipse cx="544.2" cy="494.6" rx="6.9" ry="8.3"/>
<path fill="none" d="M530.6 489.9 L536.4 490.9 M530.6 499.3 L536.4 498.3 M557.9 489.9 L552 490.9 M557.9 499.3 L552 498.3"/>
</g>
<!-- ===== polo ===== -->
<g fill="#b3aeb6" stroke="#3b3a46" stroke-width="1.1" stroke-linejoin="round">
<path d="M505.4 523.9 L455 542.5 C448 544.5 446 547 446.7 551 L457.4 596.1 L478 593.5 C481 592.8 483.5 594.5 483.8 598 L480.2 698 C480.2 701 482 702.5 485 702.5 L604.5 702.5 C607.5 702.5 609.3 701 609.3 698 L605.7 598 C606 594.5 608.5 592.8 611.5 593.5 L632.1 596 L642.3 553 C643 549 641 546 636 544.5 L582.7 523.9 C577 521.5 572 519.5 566.2 519.1 C560 518.7 555 521 551 522.2 C547 523.2 540 523.2 536 522.2 C532 521 527 518.7 521.1 519.1 C515 519.5 510 521.5 505.4 523.9 Z"/>
<path fill="none" d="M505.4 523.9 L521.1 550.4 L543.7 544.8 L566.2 550.4 L582.7 523.9 M518.5 520.4 C523 532 532 540 543.7 544.8 C555.4 540 564.4 532 570.6 520.4"/>
<path fill="none" d="M539.3 548.2 V575.2 H548.9 M483.2 533.8 C486 555 486 575 484.5 593 M606.3 533.8 C603.5 555 603.5 575 605 593 M457.4 543 L471 593.1 M630.6 543 L616.9 593.1"/>
<circle cx="547.1" cy="556" r="2.6" fill="#c8c3ca" stroke-width="1"/>
<circle cx="547.1" cy="566.9" r="2.6" fill="#c8c3ca" stroke-width="1"/>
</g>

<!-- ===== dress model ===== -->
<g fill="#ece9e2" stroke="#3c3c3c" stroke-width="0.75" stroke-linejoin="round">
<path d="M845.8 478.7 C845.5 482 845 484 844.5 485 C840 489 830 490 824.6 492.1 C821 494 820.8 497 820.5 501 C819 508 816.5 515 815 521.9 C813.5 530 813 540 813 546.9 C812.7 556 812.3 563 812 570 C811.5 576 811 580 811.2 583.5 C811.5 588 814 593 818.8 595 C820 595 819.5 592 818.5 590 C817.5 587 818 584 819.5 582 L826.5 590 L850.6 592 L875.6 590 L882.5 582 C884 584 884.5 587 883.5 590 C882.5 592 882 595 883.2 595 C888 593 890.5 588 890.8 583.5 C891 580 890.5 576 890 570 C889.7 563 889.3 556 889 546.9 C889 540 888.5 530 887 521.9 C885.5 515 883 508 881.5 501 C881.2 497 881 494 877.4 492.1 C872 490 862 489 857.5 485 C857 484 856.5 482 856.2 478.7 Z"/>
<path d="M850.6 451.7 C843 451.7 839 456 839 463 C839 468 839.8 472 842 475 C844.5 478.5 847.5 479.6 850.6 479.6 C853.7 479.6 856.7 478.5 859.2 475 C861.4 472 862.2 468 862.2 463 C862.2 456 858.2 451.7 850.6 451.7 Z"/>
<path fill="none" d="M839.3 464 C837 464 837 469 839.5 470 M861.9 464 C864.2 464 864.2 469 861.7 470 M822 530 C820.5 548 819.5 566 819.5 582 M879.2 530 C880.7 548 881.7 566 881.7 582"/>
</g>
<g fill="#ece9e2" stroke="#3c3c3c" stroke-width="0.75" stroke-linejoin="round">
<path d="M826.5 588.0 C826.8 592.5 827.7 606.3 828.5 615.0 C829.3 623.7 830.2 631.3 831.3 640.0 C832.4 648.7 834.2 658.3 835.2 667.0 C836.2 675.7 837.1 685.0 837.1 692.0 C837.1 699.0 835.8 704.1 835.2 709.2 C834.6 714.3 833.5 719.2 833.3 722.7 C833.1 726.2 833.2 728.5 834.2 730.4 C835.2 732.2 837.4 733.8 839.0 733.8 C840.6 733.8 842.7 733.9 843.8 730.4 C844.9 726.9 845.5 719.4 845.8 713.0 C846.1 706.6 846.1 699.7 845.8 692.0 C845.5 684.3 844.0 675.3 843.8 667.0 C843.6 658.7 844.3 650.7 844.8 642.0 C845.3 633.3 846.2 624.0 846.7 615.0 C847.2 606.0 847.8 592.5 848.0 588.0"/>
<path d="M874.7 588.0 C874.4 592.5 873.5 606.3 872.7 615.0 C871.9 623.7 871.0 631.3 869.9 640.0 C868.8 648.7 867.0 658.3 866.0 667.0 C865.0 675.7 864.1 685.0 864.1 692.0 C864.1 699.0 865.4 704.1 866.0 709.2 C866.6 714.3 867.7 719.2 867.9 722.7 C868.1 726.2 868.0 728.5 867.0 730.4 C866.0 732.2 863.8 733.8 862.2 733.8 C860.6 733.8 858.5 733.9 857.4 730.4 C856.3 726.9 855.7 719.4 855.4 713.0 C855.1 706.6 855.1 699.7 855.4 692.0 C855.7 684.3 857.2 675.3 857.4 667.0 C857.6 658.7 856.9 650.7 856.4 642.0 C855.9 633.3 855.0 624.0 854.5 615.0 C854.0 606.0 853.4 592.5 853.2 588.0"/>
</g>
<!-- dress pattern lines -->
<clipPath id="dressclip"><path d="M824.6 493 L831.3 492.1 C836 499 842 503.7 850.6 503.7 C859.2 503.7 865.2 499 869.8 492.1 L877.5 493 C876 502 875 510 874.6 516.2 C877 520 880 524 880.4 527.7 C878 540 875.6 552 874.6 564.2 L903.1 685.2 C897 686.5 890 688 883 689 C881 689.5 881 691.5 878.5 692 C870 693.2 861 693.8 850.6 693.8 C840 693.8 830 693.5 820.5 691.8 C819 691 819 689 817 688.5 C813 687.5 806 686.5 798.7 685.2 L826.5 564.2 C825.5 552 823 540 821.7 527.7 C822 524 825 520 826.5 516.2 C826 510 825.5 502 824.6 493 Z"/></clipPath>
<g stroke="#cdc3ee" stroke-width="1.5" fill="none" clip-path="url(#dressclip)">
<path d="M799.6 490 V700 M809.2 490 V700 M818.8 490 V700 M828.5 490 V700 M838.1 490 V700 M847.7 490 V700 M857.3 490 V700 M866.9 490 V700 M876.6 490 V700 M886.2 490 V700 M895.8 490 V700"/>
</g>
<!-- dress outline -->
<g fill="none" stroke="#7b6bcb" stroke-width="1.6" stroke-linejoin="round">
<path d="M831.3 492.1 C836 499 842 503.7 850.6 503.7 C859.2 503.7 865.2 499 869.8 492.1"/>
<path d="M824.6 493 L831.3 492.1 M869.8 492.1 L877.5 493"/>
<path d="M824.6 493 C825.5 502 826 510 826.5 516.2 C825 520 822 524 821.7 527.7 C823 540 825.5 552 826.5 564.2 L874.6 564.2 C875.6 552 878 540 880.4 527.7 C880 524 877 520 874.6 516.2 C875 510 876 502 877.5 493"/>
<path d="M827.5 516.2 C832 530 836.5 548 838 564.2 M874 516.2 C869 530 864.5 548 863 564.2 M850.6 503.7 V693"/>
<path d="M826.5 564.2 L798.7 685.2 C806 686.5 813 687.5 817 688.5 C819 689 819 691 820.5 691.8 C830 693.5 840 693.8 850.6 693.8 C861 693.8 870 693.2 878.5 692 C881 691.5 881 689.5 883 689 C890 688 897 686.5 903.1 685.2 L874.6 564.2"/>
</g>
<!-- selection -->
<g>
<rect x="798.7" y="491.5" width="104.4" height="202.3" fill="none" stroke="#8fd0cc" stroke-width="0.8"/>
<g fill="#3a9c98">
<rect x="795.8" y="488.6" width="5.8" height="5.8"/><rect x="847.7" y="488.6" width="5.8" height="5.8"/><rect x="900.2" y="488.6" width="5.8" height="5.8"/>
<rect x="795.8" y="589.7" width="5.8" height="5.8"/><rect x="900.2" y="589.7" width="5.8" height="5.8"/>
<rect x="795.8" y="690.9" width="5.8" height="5.8"/><rect x="847.7" y="690.9" width="5.8" height="5.8"/><rect x="900.2" y="690.9" width="5.8" height="5.8"/>
</g>
<path fill="#3b8fe6" d="M885.5 588.5 L895 593 L885.5 597.5 L887.5 593 Z"/>
</g>

</svg>
<div class="a" style="left:143.2px;top:82.2px;width:136.1px;height:347.1px;border-radius:6px;background:linear-gradient(165deg,#58545d 0%,#5f5c63 30%,#656267 60%,#69666a 100%);box-shadow:0 3px 10px rgba(0,0,0,0.28),inset 0 0 0 0.5px rgba(255,255,255,0.12)"></div>
<div class="a" style="left:152px;top:134.6px;width:118.4px;height:1px;background:#7c7880"></div>
<div class="a" style="left:152px;top:188.1px;width:118.4px;height:1px;background:#7c7880"></div>
<div class="a" style="left:146.2px;top:192.1px;width:129.4px;height:23.4px;border-radius:3px;background:#5a8fe0"></div>
<div class="t" style="left:175.20px;top:93.00px;font-size:8.3px;color:#f2f2f2;">Basic Shape</div>
<svg class="a" style="left:265px;top:93.00px" width="5" height="8" viewBox="0 0 5 8"><path d="M1 1 L4 4 L1 7" fill="none" stroke="#eeeeee" stroke-width="1.2" stroke-linecap="round" stroke-linejoin="round"/></svg>
<div class="t" style="left:175.20px;top:116.70px;font-size:8.3px;color:#f2f2f2;">Vector</div>
<div class="t" style="left:175.20px;top:146.60px;font-size:8.3px;color:#f2f2f2;">Text</div>
<div class="t" style="left:175.20px;top:170.00px;font-size:8.3px;color:#f2f2f2;">Image...</div>
<div class="t" style="left:175.20px;top:199.90px;font-size:8.3px;color:#f2f2f2;">Female Sketches</div>
<svg class="a" style="left:265px;top:199.90px" width="5" height="8" viewBox="0 0 5 8"><path d="M1 1 L4 4 L1 7" fill="none" stroke="#eeeeee" stroke-width="1.2" stroke-linecap="round" stroke-linejoin="round"/></svg>
<div class="t" style="left:175.20px;top:223.40px;font-size:8.3px;color:#f2f2f2;">Male Sketches</div>
<svg class="a" style="left:265px;top:223.40px" width="5" height="8" viewBox="0 0 5 8"><path d="M1 1 L4 4 L1 7" fill="none" stroke="#eeeeee" stroke-width="1.2" stroke-linecap="round" stroke-linejoin="round"/></svg>
<div class="t" style="left:175.20px;top:246.50px;font-size:8.3px;color:#f2f2f2;">General Sketches</div>
<svg class="a" style="left:265px;top:246.50px" width="5" height="8" viewBox="0 0 5 8"><path d="M1 1 L4 4 L1 7" fill="none" stroke="#eeeeee" stroke-width="1.2" stroke-linecap="round" stroke-linejoin="round"/></svg>
<div class="t" style="left:175.20px;top:269.80px;font-size:8.3px;color:#f2f2f2;">Elements</div>
<svg class="a" style="left:265px;top:269.80px" width="5" height="8" viewBox="0 0 5 8"><path d="M1 1 L4 4 L1 7" fill="none" stroke="#eeeeee" stroke-width="1.2" stroke-linecap="round" stroke-linejoin="round"/></svg>
<div class="t" style="left:175.20px;top:292.90px;font-size:8.3px;color:#f2f2f2;">Models</div>
<svg class="a" style="left:265px;top:292.90px" width="5" height="8" viewBox="0 0 5 8"><path d="M1 1 L4 4 L1 7" fill="none" stroke="#eeeeee" stroke-width="1.2" stroke-linecap="round" stroke-linejoin="round"/></svg>
<div class="t" style="left:175.20px;top:316.30px;font-size:8.3px;color:#f2f2f2;">Female Models</div>
<svg class="a" style="left:265px;top:316.30px" width="5" height="8" viewBox="0 0 5 8"><path d="M1 1 L4 4 L1 7" fill="none" stroke="#eeeeee" stroke-width="1.2" stroke-linecap="round" stroke-linejoin="round"/></svg>
<div class="t" style="left:175.20px;top:339.70px;font-size:8.3px;color:#f2f2f2;">Male Models</div>
<svg class="a" style="left:265px;top:339.70px" width="5" height="8" viewBox="0 0 5 8"><path d="M1 1 L4 4 L1 7" fill="none" stroke="#eeeeee" stroke-width="1.2" stroke-linecap="round" stroke-linejoin="round"/></svg>
<div class="t" style="left:175.20px;top:363.10px;font-size:8.3px;color:#f2f2f2;">Draft Models</div>
<svg class="a" style="left:265px;top:363.10px" width="5" height="8" viewBox="0 0 5 8"><path d="M1 1 L4 4 L1 7" fill="none" stroke="#eeeeee" stroke-width="1.2" stroke-linecap="round" stroke-linejoin="round"/></svg>
<div class="t" style="left:175.20px;top:387.00px;font-size:8.3px;color:#f2f2f2;">Simple Shapes</div>
<svg class="a" style="left:265px;top:387.00px" width="5" height="8" viewBox="0 0 5 8"><path d="M1 1 L4 4 L1 7" fill="none" stroke="#eeeeee" stroke-width="1.2" stroke-linecap="round" stroke-linejoin="round"/></svg>
<div class="t" style="left:175.20px;top:411.00px;font-size:8.3px;color:#f2f2f2;">Complex Shapes</div>
<svg class="a" style="left:265px;top:411.00px" width="5" height="8" viewBox="0 0 5 8"><path d="M1 1 L4 4 L1 7" fill="none" stroke="#eeeeee" stroke-width="1.2" stroke-linecap="round" stroke-linejoin="round"/></svg>
<svg class="a" style="left:143px;top:82px" width="140" height="350" viewBox="143 82 140 350">
<g fill="none" stroke="#d0d0d2" stroke-width="0.9" stroke-linejoin="round" stroke-linecap="round">
<!-- star -->
<path stroke-width="1.25" d="M161.5 88.2 L164.3 94.2 L170.7 95 L166 99.5 L167.3 105.9 L161.5 102.7 L155.7 105.9 L157 99.5 L152.3 95 L158.7 94.2 Z"/>
<path stroke-width="0.6" d="M157.5 95.8 C158.5 94.8 159.8 94 160.8 92"/>
<!-- pen -->
<path stroke-width="1.1" d="M153 128.5 L154.2 118.9 L159.2 115.7 L166.5 123.3 L162.9 128.3 Z"/>
<rect x="158.3" y="115.4" width="13" height="4.6" rx="2.3" transform="rotate(45 164.8 117.7)" stroke-width="1.1" fill="#5d5962"/>
<path stroke-width="0.8" d="M163.3 111.2 L164.3 112.4 M170.9 118 L169.5 117.2"/>
<circle cx="159.9" cy="122.4" r="1.4" stroke-width="0.8"/>
<path stroke-width="0.8" d="M153.6 127.9 L158.9 123.4"/>
<!-- text -->
<path stroke-width="1.1" d="M152.2 147.5 V143.5 Q152.2 142.7 153 142.7 H170.4 Q171.2 142.7 171.2 143.5 V147.5 M152.2 152.5 V156.8 Q152.2 157.6 153 157.6 H170.4 Q171.2 157.6 171.2 156.8 V152.5 M152.2 149.2 V150.8 M171.2 149.2 V150.8"/>
<path stroke-width="1.3" d="M156.3 146.3 H166.6 M161.5 146.3 V154.7"/>
<!-- image -->
<rect x="152.3" y="166.2" width="19.2" height="14.4" rx="1.2" stroke-width="1.1"/>
<path stroke-width="1.1" d="M153 176.6 L158.4 171.2 L166.2 179.2 M165.6 176.4 L167.4 174.8 L171.2 178.4"/>
<circle cx="165" cy="170.4" r="1.7" stroke-width="1"/>
<!-- scissors -->
<path d="M153.3 264.3 L165.6 277.6 M169.6 264.3 L156.9 277.6" stroke-width="1.15"/>
<circle cx="155.2" cy="279.8" r="2.6" stroke-width="1.2"/>
<circle cx="167.3" cy="279.8" r="2.6" stroke-width="1.2"/>
<!-- female models torso -->
<path d="M158.5 312 C158.5 309.5 163.5 309.5 163.5 312 C163.5 314.5 162.5 316 161 316 C159.5 316 158.5 314.5 158.5 312 Z M159.5 316 L158.5 318 C155 319 153 319 153 322 L152 328 M162.5 316 L163.5 318 C167 319 169.5 319 169.5 322 L170.5 328 M155.5 323 C157 326 159 327 161 326 C163 327 165 326 166.5 323 M155 321 L154.5 328 M167 321 L167.5 328" stroke-width="0.7"/>
<!-- complex star -->
<path d="M161.4 405.5 L164.1 411.4 L170.5 412 L165.6 416.3 L167.1 422.5 L161.4 419.3 L155.7 422.5 L157.2 416.3 L152.3 412 L158.7 411.4 Z"/>
<path d="M161.4 405.5 L161.4 415.5 M152.3 412 L161.4 415.5 L170.5 412 M155.7 422.5 L161.4 415.5 L167.1 422.5 M158.7 411.4 L163 418 M164.1 411.4 L159.5 418" stroke-width="0.5"/>
</g>
<defs><clipPath id="fc"><circle cx="161.2" cy="203.9" r="9.2"/></clipPath><clipPath id="mc"><circle cx="161.2" cy="227.4" r="9.2"/></clipPath></defs>
<circle cx="161.2" cy="203.9" r="9.4" fill="none" stroke="#b5c3d6" stroke-width="1.1"/>
<circle cx="161.2" cy="227.4" r="9.4" fill="none" stroke="#c2c2c4" stroke-width="1.2"/>
<g fill="#c6ccd4" clip-path="url(#fc)">
<path d="M161.2 196.6 C158.3 196.6 157 198.6 157 201.6 L156.8 206.4 H159.5 L159.6 208 C155.8 209 153.2 210.5 152.6 213.5 V216 H169.8 V213.5 C169.2 210.5 166.6 209 162.8 208 L162.9 206.4 H165.6 L165.4 201.6 C165.4 198.6 164.1 196.6 161.2 196.6 Z"/>
</g>
<g fill="#c4c4c6" clip-path="url(#mc)">
<path d="M161.2 219.6 C158.6 219.6 157.5 221.3 157.5 224.2 C157.5 227.2 158.6 229.6 159.7 230.5 L159.7 232.2 C156.5 233 154 234 152.8 236 V240 H169.6 V236 C168.4 234 165.9 233 162.7 232.2 L162.7 230.5 C163.8 229.6 164.9 227.2 164.9 224.2 C164.9 221.3 163.8 219.6 161.2 219.6 Z"/>
</g>
<g fill="#c4c4c6">
<!-- general: three people -->
<circle cx="161.2" cy="245.8" r="2.7"/><circle cx="156.6" cy="248" r="2"/><circle cx="165.8" cy="248" r="2"/>
<path d="M151.8 256.8 C152.5 254 154.3 251.8 156.6 251.4 C157.5 251.3 158.3 251.5 158.9 251.9 C159.5 251 160.3 250.6 161.2 250.6 C162.1 250.6 162.9 251 163.5 251.9 C164.1 251.5 164.9 251.3 165.8 251.4 C168.1 251.8 169.9 254 170.6 256.8 Z"/>
<path d="M153.5 256.8 C154.5 253.5 157.5 252.2 161.2 252.2 C164.9 252.2 167.9 253.5 168.9 256.8" fill="none" stroke="#6a666b" stroke-width="0.5"/>
<!-- models two figures -->
<circle cx="157.8" cy="289.8" r="1.8"/><circle cx="165.2" cy="289.8" r="1.8"/>
<path d="M155.3 292.2 H160.3 C161 292.2 161.4 292.8 161.5 293.5 L162 298.5 L161.2 298.8 L160.4 295 L160.2 299 V305.8 H158.6 L158 300 L157.4 305.8 H155.8 V299 L155.5 295 L154.6 298.8 L153.8 298.5 L154.2 293.5 C154.3 292.8 154.7 292.2 155.3 292.2 Z"/>
<path d="M163 292.2 H167.4 C168 292.2 168.5 292.8 168.6 293.5 L169.6 298.5 L168.8 298.8 L167.9 295.5 L169 300.5 H167.6 V305.8 H166.1 L165.2 301 L164.3 305.8 H162.8 V300.5 H161.4 L162.5 295.5 L161.6 298.8 L160.8 298.5 L161.8 293.5 C161.9 292.8 162.4 292.2 163 292.2 Z"/>
<!-- male models small figure -->
<path d="M161.2 335.5 C160.2 335.5 160 336.3 160 337 C160 337.7 160.3 338.3 160.7 338.5 L160.5 339.2 C159 339.6 158.3 340 158.1 341 L157.8 346 L158.7 346.3 L159 343 L159.3 346.5 L159.6 352 L160.8 352 L161.2 347 L161.6 352 L162.8 352 L163.1 346.5 L163.4 343 L163.7 346.3 L164.6 346 L164.3 341 C164.1 340 163.4 339.6 161.9 339.2 L161.7 338.5 C162.1 338.3 162.4 337.7 162.4 337 C162.4 336.3 162.2 335.5 161.2 335.5 Z"/>
<!-- draft models -->
<path d="M161.2 358.5 C160.2 358.5 160 359.3 160 360 C160 360.7 160.3 361.3 160.7 361.5 L160.5 362.2 C159 362.6 158.3 363 158.1 364 L157.8 369 L158.7 369.3 L159 366 L159.3 369.5 L159.6 375.5 L160.8 375.5 L161.2 370 L161.6 375.5 L162.8 375.5 L163.1 369.5 L163.4 366 L163.7 369.3 L164.6 369 L164.3 364 C164.1 363 163.4 362.6 161.9 362.2 L161.7 361.5 C162.1 361.3 162.4 360.7 162.4 360 C162.4 359.3 162.2 358.5 161.2 358.5 Z"/>
<!-- heart -->
<path d="M161.2 399.5 C157 396 151.5 393.5 151.5 388 C151.5 385 153.8 382.8 156.5 382.8 C158.5 382.8 160.2 384 161.2 385.5 C162.2 384 163.9 382.8 165.9 382.8 C168.6 382.8 170.9 385 170.9 388 C170.9 393.5 165.4 396 161.2 399.5 Z"/>
</g>
</svg>

<div class="a" style="left:276.3px;top:188.9px;width:108.3px;height:332.9px;border-radius:5px;background:linear-gradient(180deg,#656168 0%,#69666a 100%);box-shadow:0 3px 10px rgba(0,0,0,0.3),inset 0 0 0 0.5px rgba(255,255,255,0.12)"></div>
<div class="t" style="left:308.40px;top:200.10px;font-size:8.1px;color:#f2f2f2;">Tank Top</div>
<div class="t" style="left:308.40px;top:223.30px;font-size:8.1px;color:#f2f2f2;">Skirt 1</div>
<div class="t" style="left:308.40px;top:246.90px;font-size:8.1px;color:#f2f2f2;">Skirt 2</div>
<div class="t" style="left:308.40px;top:269.70px;font-size:8.1px;color:#f2f2f2;">Long Skirt</div>
<div class="t" style="left:308.40px;top:292.90px;font-size:8.1px;color:#f2f2f2;">Underwear</div>
<div class="t" style="left:308.40px;top:316.10px;font-size:8.1px;color:#f2f2f2;">Swimwear Top</div>
<div class="t" style="left:308.40px;top:339.30px;font-size:8.1px;color:#f2f2f2;">Swimwear Bottom</div>
<div class="t" style="left:308.40px;top:362.90px;font-size:8.1px;color:#f2f2f2;">Swimwear 1</div>
<div class="t" style="left:308.40px;top:386.40px;font-size:8.1px;color:#f2f2f2;">Swimwear 2</div>
<div class="t" style="left:308.40px;top:409.90px;font-size:8.1px;color:#f2f2f2;">Swimwear 3</div>
<div class="t" style="left:308.40px;top:433.30px;font-size:8.1px;color:#f2f2f2;">Long Dress 1</div>
<div class="t" style="left:308.40px;top:456.40px;font-size:8.1px;color:#f2f2f2;">Long Dress 2</div>
<div class="t" style="left:308.40px;top:479.90px;font-size:8.1px;color:#f2f2f2;">Long Dress 3</div>
<div class="t" style="left:308.40px;top:503.10px;font-size:8.1px;color:#f2f2f2;">Long Dress 4</div>
<svg class="a" style="left:280px;top:190px" width="30" height="330" viewBox="280 190 30 330">
<g fill="none" stroke="#cfcfd1" stroke-width="0.8" stroke-linejoin="round">
<!-- tank top -->
<path d="M290 195.5 L291.5 195.5 C292 198.5 293 199.5 294.3 199.5 C295.6 199.5 296.6 198.5 297.1 195.5 L298.6 195.5 C298.8 198 299.5 200 300.5 201 C299.8 205 299.8 209 300.6 212.5 L288 212.5 C288.8 209 288.8 205 288.1 201 C289.1 200 289.8 198 290 195.5 Z M288.3 210.5 H300.4"/>
<!-- skirt 1 -->
<path d="M289.5 218.5 H299.3 C300.5 224 302 229 303 234.5 C298 236.5 291 236.5 285.6 234.5 C286.6 229 288 224 289.5 218.5 Z M289.2 220.5 H299.6 M286.2 232.5 C291 234 297.5 234 302.4 232.5"/>
</g>
<g fill="#b9b9bb" stroke="none">
<!-- skirt 2 -->
<path d="M290 240.8 H299.8 C301 246 302.5 252 303.2 257.5 C298.5 259.8 291.5 259.8 286.6 257.5 C287.5 252 289 246 290 240.8 Z"/>
<!-- long skirt -->
<path d="M291.2 264.4 H297.6 C297.9 270 298.2 276 298 282.3 H290.8 C290.6 276 290.9 270 291.2 264.4 Z"/>
<!-- underwear -->
<path d="M285 292.5 C289 293.5 299.5 293.5 303.8 292.5 C303.2 295 301 296.5 298.5 297.3 C297 298.5 296 300.5 294.4 301.1 C292.8 300.5 291.8 298.5 290.3 297.3 C287.8 296.5 285.6 295 285 292.5 Z"/>
<!-- swim bottom -->
<path d="M285 340 C289 341 299.5 341 303.8 340 C302.5 342 300 343 297.5 344 C296.5 345.5 295.5 346.7 294.4 346.7 C293.3 346.7 292.3 345.5 291.3 344 C288.8 343 286.3 342 285 340 Z"/>
<!-- swimwear top -->
<path d="M286.2 322.5 C287.5 320 290 319.5 292.5 320.5 L294.4 322 L296.3 320.5 C298.8 319.5 301.3 320 302.6 322.5 C303.5 324 303.5 326 302.5 326.5 C300 327 297 325.5 294.4 324.5 C291.8 325.5 288.8 327 286.3 326.5 C285.3 326 285.3 324 286.2 322.5 Z"/>
</g>
<path fill="none" stroke="#cfcfd1" stroke-width="0.9" d="M287.5 321.5 C287.5 315 290.5 312 294.4 312 C298.3 312 301.3 315 301.3 321.5"/>
<g fill="#b9b9bb">
<!-- swimwear 1 -->
<path d="M290.5 357.5 L291.2 357.5 L291.8 363 C292.5 364.5 293.3 365.5 294.9 365 C296.5 365.5 297.3 364.5 298 363 L298.6 357.5 L299.3 357.5 C299.8 361 300.3 364 300.2 366.5 C300 369 299.5 371 299.8 374 C297.5 376 292.3 376 290 374 C290.3 371 289.8 369 289.6 366.5 C289.5 364 290 361 290.5 357.5 Z"/>
<!-- swimwear 2 -->
<path d="M291.5 380.8 H298.5 C299 382.5 299.8 384 299.5 386.5 C298.8 389 299.2 391 300 393 C299.5 396 297.5 398.5 294.9 399.6 C292.3 398.5 290.3 396 289.8 393 C290.6 391 291 389 290.3 386.5 C290 384 290.8 382.5 291.5 380.8 Z"/>
<!-- swimwear 3 -->
<path d="M291 404 L292 404 C292.3 406 293 407.5 294.9 407.5 C296.8 407.5 297.5 406 297.8 404 L298.8 404 C299.2 406.5 300 408 299.6 410.5 C298.8 413 299.2 415 300 417 C299.5 420 297.5 422 294.9 422.8 C292.3 422 290.3 420 289.8 417 C290.6 415 291 413 290.2 410.5 C289.8 408 290.6 406.5 291 404 Z"/>
<!-- dresses -->
<path d="M292.5 427.2 L294.9 428.5 L297.3 427.2 C298.8 427.8 300 429.5 300.8 431.8 L299.5 432.8 L298.8 431.5 C298.5 433.5 298.5 435 299 436 C299.8 439 300.5 442 300.5 445 H289.3 C289.3 442 290 439 290.8 436 C291.3 435 291.3 433.5 291 431.5 L290.3 432.8 L289 431.8 C289.8 429.5 291 427.8 292.5 427.2 Z"/>
<path d="M292.5 450.4 L294.9 451.7 L297.3 450.4 C298.8 451 300 452.7 300.8 455 L299.5 456 L298.8 454.7 C298.5 456.7 298.5 458.2 299 459.2 C299.8 462.2 300.5 465.2 300.5 468.1 H289.3 C289.3 465.2 290 462.2 290.8 459.2 C291.3 458.2 291.3 456.7 291 454.7 L290.3 456 L289 455 C289.8 452.7 291 451 292.5 450.4 Z"/>
<path d="M292.5 474.7 L294.9 476 L297.3 474.7 C298.8 475.3 300 477 300.8 479.3 L299.5 480.3 L298.8 479 C298.5 481 298.5 482.5 299 483.5 C299.8 486.5 300.5 490.5 300.5 493.5 H289.3 C289.3 490.5 290 486.5 290.8 483.5 C291.3 482.5 291.3 481 291 479 L290.3 480.3 L289 479.3 C289.8 477 291 475.3 292.5 474.7 Z"/>
<path d="M292 497.8 H297.8 C298.3 502 298.3 506 298.5 510 C298.6 512.5 298.7 514.5 298.7 516.7 H291.1 C291.1 514.5 291.2 512.5 291.3 510 C291.5 506 291.5 502 292 497.8 Z"/>
</g>
<g stroke="#8a898c" stroke-width="0.35" fill="none">
<path d="M289 256 L290.5 242 M291.5 257 L292 242 M294 258 L294 242 M296.5 257.5 L296 242 M299 257 L298.5 242 M301.5 256 L300 242"/>
<path d="M294.4 437 V445 M294.4 460 V468 M294.4 484 V493.5 M294.4 500 V516.7"/>
</g>
</svg>

<div class="a" style="left:1040.00px;top:86.50px;width:153.00px;height:688.50px;background:#201c27;border-radius:0 0 4px 0;box-shadow:inset 0 -1px 0 #3b3842,inset -1px 0 0 #2a2731"></div>
<div class="a" style="left:1047.30px;top:94.80px;width:43.70px;height:14.10px;background:#2a282e;border:1px solid #57555c;border-radius:2.5px"></div><div class="t" style="left:1049.90px;top:97.70px;font-size:8.6px;color:#ececec;">1780</div><div class="t" style="left:1083.00px;top:98.35px;font-size:7px;color:#85838a">X</div>
<div class="a" style="left:1095.00px;top:94.80px;width:43.80px;height:14.10px;background:#2a282e;border:1px solid #57555c;border-radius:2.5px"></div><div class="t" style="left:1097.60px;top:97.70px;font-size:8.6px;color:#ececec;">1080</div><div class="t" style="left:1130.80px;top:98.35px;font-size:7px;color:#85838a">Y</div>
<div class="a" style="left:1142.80px;top:94.80px;width:44.00px;height:14.10px;background:#2a282e;border:1px solid #57555c;border-radius:2.5px"></div><div class="t" style="left:1145.40px;top:97.70px;font-size:8.6px;color:#ececec;">0</div><div class="t" style="left:1178.80px;top:98.35px;font-size:7px;color:#85838a">°</div>
<div class="a" style="left:1047.30px;top:117.80px;width:43.70px;height:14.70px;background:#2a282e;border:1px solid #57555c;border-radius:2.5px"></div><div class="t" style="left:1049.90px;top:121.00px;font-size:8.6px;color:#ececec;">170</div><div class="t" style="left:1083.00px;top:121.65px;font-size:7px;color:#85838a">W</div>
<div class="a" style="left:1095.00px;top:117.80px;width:43.80px;height:14.70px;background:#2a282e;border:1px solid #57555c;border-radius:2.5px"></div><div class="t" style="left:1097.60px;top:121.00px;font-size:8.6px;color:#ececec;">330</div><div class="t" style="left:1130.80px;top:121.65px;font-size:7px;color:#85838a">H</div>
<div class="a" style="left:1143.50px;top:119.00px;width:19.50px;height:12.40px;background:#57555b;border-radius:3px"></div>
<div class="a" style="left:1166.70px;top:119.00px;width:19.60px;height:12.40px;background:#57555b;border-radius:3px"></div>
<svg class="a" style="left:1143.5px;top:119px" width="43" height="13" viewBox="1143.5 119 43 13"><path d="M1152.8 121 L1152.8 129.6 L1148.6 129.6 Z" fill="#f2f2f2"/><path d="M1153.8 121 L1153.8 129.6 L1158 129.6 Z" fill="#8d8b92"/><path d="M1171.5 121.2 L1181.5 125.2 L1171.5 125.2 Z" fill="#f2f2f2"/><path d="M1171.5 126.2 L1181.5 126.2 L1171.5 130.2 Z" fill="#8d8b92"/></svg>
<div class="a" style="left:1040.00px;top:139.00px;width:153.00px;height:0.80px;background:#34313a;"></div>
<div class="t" style="left:1047.60px;top:148.29px;font-size:10.4px;color:#f0f0f0;font-weight:bold;">Style</div>
<div class="a" style="left:1047.00px;top:163.20px;width:140.00px;height:0.80px;background:#37343d;"></div>
<div class="a" style="left:1048.20px;top:171.70px;width:136.30px;height:12.30px;background:#5a585f;border-radius:3px"></div>
<div class="t" style="left:1053.40px;top:173.90px;font-size:8.3px;color:#f2f2f2;">Color Fills</div>
<div class="a" style="left:1174.20px;top:172.20px;width:10.10px;height:11.30px;background:#2f7cf0;border-radius:3px"></div>
<svg class="a" style="left:1174.2px;top:172.2px" width="10" height="11" viewBox="0 0 10 11"><path d="M3 4.2 L5 2.4 L7 4.2 M3 6.8 L5 8.6 L7 6.8" fill="none" stroke="#fff" stroke-width="0.9" stroke-linecap="round"/></svg>
<div class="a" style="left:1048.20px;top:192.50px;width:31.00px;height:24.60px;background:#ee4b9b;border-radius:4px"></div>
<div class="a" style="left:1083.70px;top:192.50px;width:31.00px;height:24.60px;background:#7c7c7c;border-radius:4px"></div>
<div class="a" style="left:1119.40px;top:192.50px;width:31.00px;height:24.60px;background:#ee4424;border-radius:4px"></div>
<div class="a" style="left:1154.90px;top:192.50px;width:31.00px;height:24.60px;background:#ef56f5;border-radius:4px"></div>
<div class="a" style="left:1048.20px;top:221.90px;width:31.00px;height:24.60px;background:#3a93f6;border-radius:4px"></div>
<div class="a" style="left:1083.70px;top:221.90px;width:31.00px;height:24.60px;background:#f39b3b;border-radius:4px"></div>
<div class="a" style="left:1119.40px;top:221.90px;width:31.00px;height:24.60px;background:#f190f3;border-radius:4px"></div>
<div class="a" style="left:1154.90px;top:221.90px;width:31.00px;height:24.60px;background:#3a8c2a;border-radius:4px"></div>
<div class="a" style="left:1040.00px;top:254.60px;width:153.00px;height:358.80px;background:#2e2e2e;"></div>
<div class="t" style="left:1047.60px;top:263.36px;font-size:8.8px;color:#f0f0f0;">Color Fill</div>
<div class="a" style="left:1165.80px;top:262.80px;width:17.30px;height:11.00px;background:#2d7af6;border-radius:5.5px"></div><div class="a" style="left:1172.40px;top:263.20px;width:10.2px;height:10.2px;border-radius:50%;background:#fff"></div>
<div class="a" style="left:1052.70px;top:279.00px;width:128.30px;height:0.80px;background:#3f3f3f;"></div>
<div class="t" style="left:1052.70px;top:292.70px;font-size:8.3px;color:#e2e2e2;">Fill Color:</div>
<div class="a" style="left:1141.50px;top:288.90px;width:39.80px;height:13.60px;background:#4b4b4b;border-radius:3px;border:0.8px solid #565656"></div>
<svg class="a" style="left:1141.8px;top:289.2px" width="26.4" height="13" viewBox="0 0 26.4 13"><rect width="26.4" height="13" fill="#000"/><path d="M0 13 L26.4 0 L26.4 13 Z" fill="#fff"/></svg>
<div class="a" style="left:1170.50px;top:291.50px;width:8.4px;height:8.4px;border-radius:50%;background:radial-gradient(circle,#ffffff 0%,rgba(255,255,255,0.6) 30%,rgba(255,255,255,0) 70%),conic-gradient(#ff5a5a,#ffd84a,#6ee36e,#4fd8ff,#6a6aff,#ff5ad8,#ff5a5a)"></div>
<div class="a" style="left:1052.00px;top:316.90px;width:7.30px;height:7.10px;background:#5b5b5b;border-radius:1.5px"></div>
<div class="t" style="left:1061.60px;top:316.50px;font-size:8.3px;color:#e2e2e2;">Shadow:</div>
<div class="a" style="left:1141.20px;top:314.10px;width:40.10px;height:13.70px;background:#5a5a5a;border-radius:3px;border:0.8px solid #6e6e6e"></div>
<div class="a" style="left:1167.80px;top:314.50px;width:0.80px;height:12.90px;background:#6e6e6e;"></div>
<div class="a" style="left:1170.50px;top:316.80px;width:8.4px;height:8.4px;border-radius:50%;background:radial-gradient(circle,#ffffff 0%,rgba(255,255,255,0.6) 30%,rgba(255,255,255,0) 70%),conic-gradient(#ff5a5a,#ffd84a,#6ee36e,#4fd8ff,#6a6aff,#ff5ad8,#ff5a5a)"></div>
<div class="t" style="left:1052.70px;top:337.40px;font-size:8.3px;color:#e2e2e2;">Distance:</div>
<div class="a" style="left:1098.50px;top:340.50px;width:82.50px;height:1.80px;background:#383838;border-radius:1px"></div>
<div class="a" style="left:1113.20px;top:336.60px;width:9.6px;height:9.6px;border-radius:50%;background:#474747"></div>
<div class="t" style="left:1052.70px;top:357.60px;font-size:8.3px;color:#e2e2e2;">Blur:</div>
<div class="a" style="left:1098.50px;top:360.70px;width:82.50px;height:1.80px;background:#383838;border-radius:1px"></div>
<div class="a" style="left:1111.00px;top:356.80px;width:9.6px;height:9.6px;border-radius:50%;background:#474747"></div>
<div class="t" style="left:1052.70px;top:377.70px;font-size:8.3px;color:#e2e2e2;">Angle:</div>
<div class="a" style="left:1100.6px;top:375.6px;width:12.4px;height:12.4px;border-radius:50%;background:#464646"></div>
<div class="a" style="left:1108.3px;top:378.5px;width:3.2px;height:3.2px;border-radius:50%;background:#f4f4f4"></div>
<div class="a" style="left:1046.60px;top:401.90px;width:140.60px;height:0.90px;background:#4a4a4a;"></div>
<div class="t" style="left:1047.60px;top:410.76px;font-size:8.8px;color:#f0f0f0;">Basic Stroke</div>
<div class="a" style="left:1165.80px;top:409.80px;width:17.30px;height:11.00px;background:#2d7af6;border-radius:5.5px"></div><div class="a" style="left:1172.40px;top:410.20px;width:10.2px;height:10.2px;border-radius:50%;background:#fff"></div>
<div class="a" style="left:1052.70px;top:426.20px;width:128.30px;height:0.80px;background:#3f3f3f;"></div>
<div class="t" style="left:1051.40px;top:439.20px;font-size:8.3px;color:#e2e2e2;">Stroke Color:</div>
<div class="a" style="left:1141.20px;top:437.10px;width:40.10px;height:12.70px;background:#4b4b4b;border-radius:3px;border:0.8px solid #565656"></div>
<div class="a" style="left:1141.60px;top:437.50px;width:26.30px;height:11.90px;background:#8a7fc1;border-radius:2.5px 0 0 2.5px"></div>
<div class="a" style="left:1170.50px;top:439.20px;width:8.4px;height:8.4px;border-radius:50%;background:radial-gradient(circle,#ffffff 0%,rgba(255,255,255,0.6) 30%,rgba(255,255,255,0) 70%),conic-gradient(#ff5a5a,#ffd84a,#6ee36e,#4fd8ff,#6a6aff,#ff5ad8,#ff5a5a)"></div>
<div class="a" style="left:1051.40px;top:460.30px;width:36.80px;height:11.60px;background:#1c1c1c;border:0.8px solid #3b3b3b;border-radius:1.5px"></div>
<div class="t" style="left:1082.20px;top:462.15px;font-size:8.6px;color:#ececec;">3</div>
<div class="a" style="left:1090.70px;top:460.20px;width:7.80px;height:11.80px;background:#555555;border-radius:3px"></div>
<svg class="a" style="left:1090.7px;top:460.2px" width="8" height="12" viewBox="0 0 8 12"><path d="M2.2 4.5 L4 2.6 L5.8 4.5 M2.2 7.5 L4 9.4 L5.8 7.5" fill="none" stroke="#cfcfcf" stroke-width="0.8" stroke-linecap="round"/></svg>
<div class="a" style="left:1103.70px;top:460.70px;width:77.10px;height:11.20px;background:#5f5f5f;border-radius:3px"></div>
<div class="t" style="left:1119.60px;top:462.30px;font-size:8.3px;color:#f0f0f0;">Solid Line</div>
<div class="a" style="left:1170.60px;top:461.00px;width:10.00px;height:10.60px;background:#2f7cf0;border-radius:3px"></div>
<svg class="a" style="left:1170.6px;top:461px" width="10" height="11" viewBox="0 0 10 11"><path d="M3 4 L5 2.3 L7 4 M3 6.6 L5 8.3 L7 6.6" fill="none" stroke="#fff" stroke-width="0.9" stroke-linecap="round"/></svg>
<div class="a" style="left:1046.60px;top:485.80px;width:140.60px;height:0.90px;background:#4a4a4a;"></div>
<div class="t" style="left:1047.60px;top:494.66px;font-size:8.8px;color:#f0f0f0;">Pattern Fill</div>
<div class="a" style="left:1165.60px;top:494.00px;width:17.30px;height:11.00px;background:#2d7af6;border-radius:5.5px"></div><div class="a" style="left:1172.20px;top:494.40px;width:10.2px;height:10.2px;border-radius:50%;background:#fff"></div>
<div class="a" style="left:1052.70px;top:510.20px;width:128.30px;height:0.80px;background:#3f3f3f;"></div>
<div class="t" style="left:1052.70px;top:522.80px;font-size:8.3px;color:#e2e2e2;">Pattern Color:</div>
<div class="a" style="left:1140.60px;top:520.20px;width:40.90px;height:13.30px;background:#4b4b4b;border-radius:3px;border:0.8px solid #565656"></div>
<div class="a" style="left:1141.00px;top:520.60px;width:26.90px;height:12.50px;background:#d9d5e9;border-radius:2.5px 0 0 2.5px"></div>
<div class="a" style="left:1170.50px;top:522.70px;width:8.4px;height:8.4px;border-radius:50%;background:radial-gradient(circle,#ffffff 0%,rgba(255,255,255,0.6) 30%,rgba(255,255,255,0) 70%),conic-gradient(#ff5a5a,#ffd84a,#6ee36e,#4fd8ff,#6a6aff,#ff5ad8,#ff5a5a)"></div>
<div class="t" style="left:1052.70px;top:546.50px;font-size:8.3px;color:#e2e2e2;">Spacing:</div>
<div class="a" style="left:1094.40px;top:549.60px;width:59.10px;height:1.80px;background:#3c3c3c;border-radius:1px"></div>
<div class="a" style="left:1094.40px;top:549.60px;width:19.60px;height:1.80px;background:#2d7af6;border-radius:1px"></div>
<div class="a" style="left:1109.30px;top:545.80px;width:9.4px;height:9.4px;border-radius:50%;background:#9b9b9b"></div>
<div class="a" style="left:1160.00px;top:544.80px;width:22.60px;height:11.30px;background:#1c1c1c;border:0.8px solid #3b3b3b;border-radius:1.5px"></div>
<div class="t" style="left:1162.30px;top:546.40px;font-size:8.4px;color:#ececec;">15</div>
<div class="t" style="left:1052.70px;top:561.80px;font-size:8.3px;color:#e2e2e2;">Lead-in:</div>
<div class="a" style="left:1094.40px;top:564.90px;width:59.10px;height:1.80px;background:#3c3c3c;border-radius:1px"></div>
<div class="a" style="left:1094.50px;top:561.10px;width:9.4px;height:9.4px;border-radius:50%;background:#9b9b9b"></div>
<div class="a" style="left:1160.00px;top:560.60px;width:22.60px;height:10.40px;background:#1c1c1c;border:0.8px solid #3b3b3b;border-radius:1.5px"></div>
<div class="t" style="left:1162.30px;top:561.75px;font-size:8.4px;color:#ececec;">0</div>
<div class="t" style="left:1052.70px;top:577.10px;font-size:8.3px;color:#e2e2e2;">Width:</div>
<div class="a" style="left:1094.40px;top:580.20px;width:59.10px;height:1.80px;background:#3c3c3c;border-radius:1px"></div>
<div class="a" style="left:1094.40px;top:580.20px;width:9.10px;height:1.80px;background:#2d7af6;border-radius:1px"></div>
<div class="a" style="left:1098.80px;top:576.40px;width:9.4px;height:9.4px;border-radius:50%;background:#9b9b9b"></div>
<div class="a" style="left:1160.00px;top:576.30px;width:22.60px;height:10.50px;background:#1c1c1c;border:0.8px solid #3b3b3b;border-radius:1.5px"></div>
<div class="t" style="left:1162.30px;top:577.50px;font-size:8.4px;color:#ececec;">3</div>
<div class="t" style="left:1052.70px;top:592.50px;font-size:8.3px;color:#e2e2e2;">Angle:</div>
<div class="a" style="left:1094.40px;top:595.60px;width:59.10px;height:1.80px;background:#3c3c3c;border-radius:1px"></div>
<div class="a" style="left:1094.50px;top:591.80px;width:9.4px;height:9.4px;border-radius:50%;background:#9b9b9b"></div>
<div class="a" style="left:1160.00px;top:590.80px;width:22.60px;height:11.20px;background:#1c1c1c;border:0.8px solid #3b3b3b;border-radius:1.5px"></div>
<div class="t" style="left:1162.30px;top:592.35px;font-size:8.4px;color:#ececec;">0</div>
<div class="a" style="left:1046.60px;top:613.00px;width:140.60px;height:1.00px;background:#48454d;"></div>
</body></html>
